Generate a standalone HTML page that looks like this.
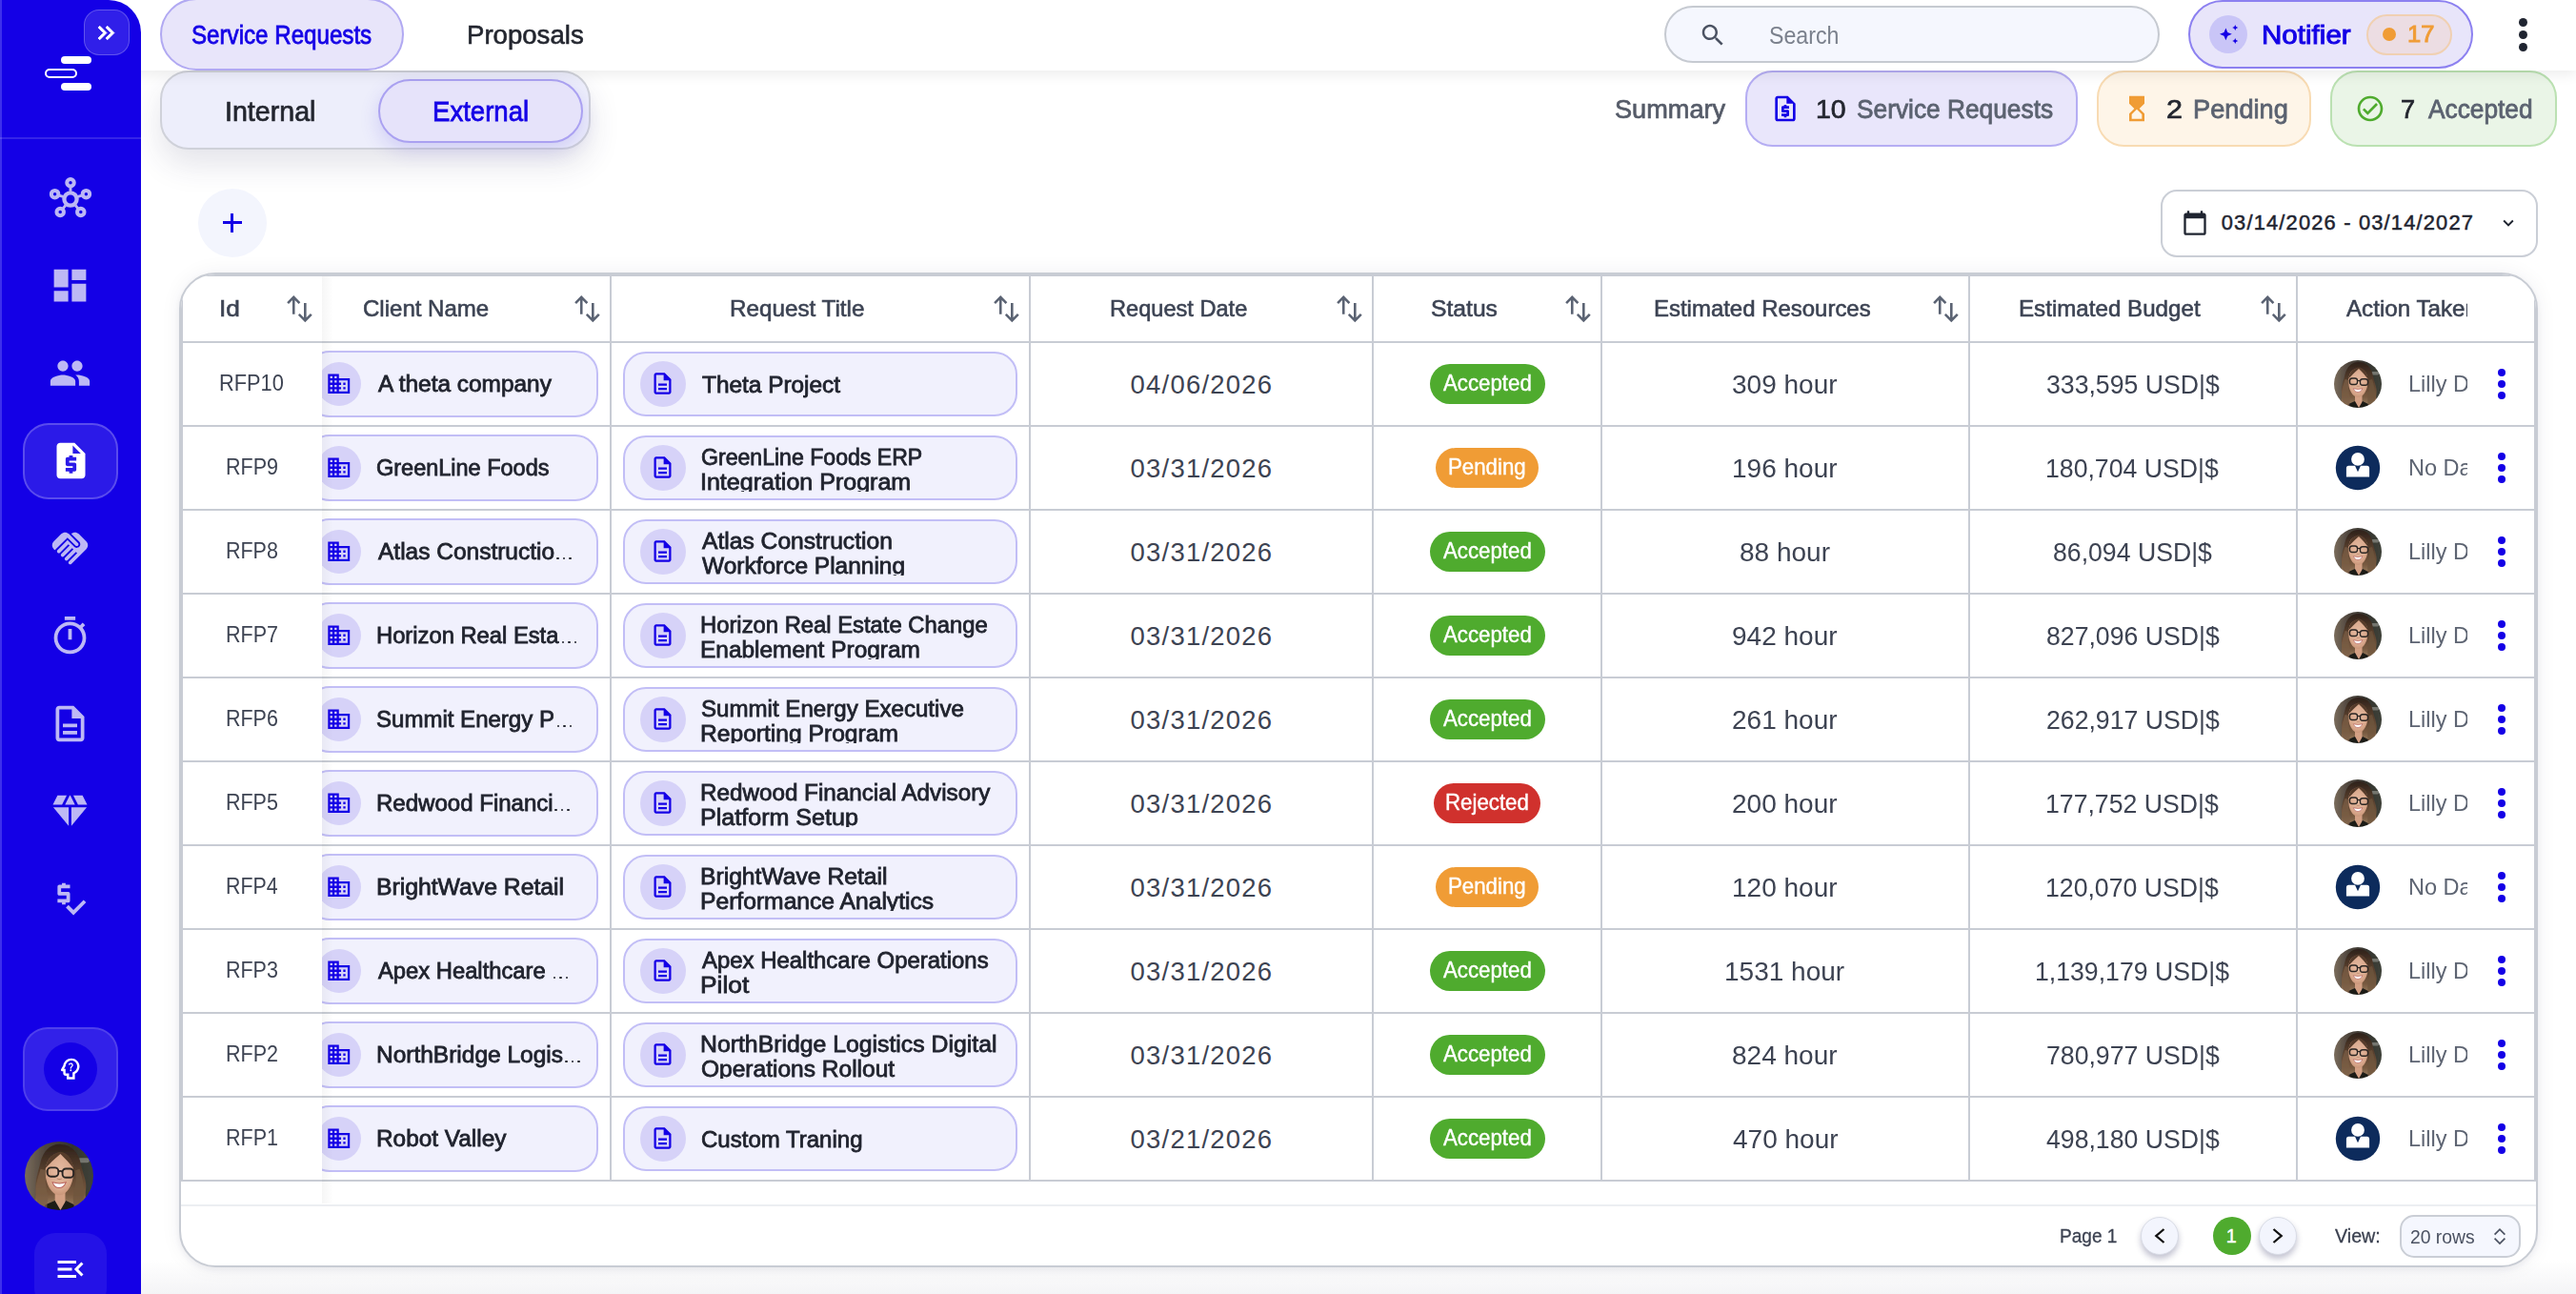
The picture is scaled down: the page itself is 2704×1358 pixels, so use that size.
<!DOCTYPE html>
<html><head><meta charset="utf-8"><title>Service Requests</title><style>
html,body{margin:0;padding:0}
body{width:2704px;height:1358px;overflow:hidden;position:relative;background:#fff;font-family:"Liberation Sans",sans-serif}
.L{position:absolute;left:0;top:0}
.t{position:absolute;white-space:nowrap;transform-origin:0 50%;display:block}
#hdr{position:absolute;left:100px;top:0;width:2604px;height:74px;background:#fff;box-shadow:0 5px 12px rgba(0,0,0,.07);z-index:2}
#btm{position:absolute;left:148px;top:1322px;width:2556px;height:36px;background:linear-gradient(#fff,#f4f4f6)}
#side{position:absolute;left:0;top:0;width:148px;height:1358px;box-sizing:border-box;background:#1400e6;border-top-right-radius:34px;border-left:2px solid #3d2fec}
#card{position:absolute;left:188px;top:286px;width:2476px;height:1044px;box-sizing:border-box;border:2px solid #c8ccd4;border-radius:38px;background:#fff;box-shadow:0 3px 6px rgba(30,30,60,.06),0 0 22px rgba(30,30,60,.06);overflow:hidden}
#frame{position:absolute;left:0;top:0;width:2472px;height:952px;box-sizing:border-box;border:2px solid #c8ccd4;border-bottom:none}
</style></head><body>
<svg width="0" height="0" style="position:absolute"><defs>
<linearGradient id="avbg" x1="0" x2="1" y1="0" y2="0"><stop offset="0" stop-color="#7a6c5c"/><stop offset=".3" stop-color="#4e453d"/><stop offset=".7" stop-color="#33332d"/><stop offset="1" stop-color="#3f423a"/></linearGradient>
<linearGradient id="avh" x1="0" y1="0" x2="0" y2="1"><stop offset="0" stop-color="#2e211a"/><stop offset=".35" stop-color="#523b2b"/><stop offset=".75" stop-color="#785a40"/><stop offset="1" stop-color="#a48a6a"/></linearGradient>
<radialGradient id="avf" cx=".5" cy=".45" r=".6"><stop offset="0" stop-color="#e6bca3"/><stop offset=".7" stop-color="#d9a88c"/><stop offset="1" stop-color="#c48f72"/></radialGradient>
<clipPath id="avc"><circle cx="50" cy="50" r="50"/></clipPath>
<filter id="avb" x="-5%" y="-5%" width="110%" height="110%"><feGaussianBlur stdDeviation="0.9"/></filter>
</defs></svg>
<div id="hdr"></div>
<div id="btm"></div>
<div class="L" style="z-index:4">
<div id="side"></div>
<div style="position:absolute;left:0px;top:144px;width:148px;height:2px;background:rgba(255,255,255,.14)"></div>
<div style="position:absolute;left:88px;top:10px;width:48px;height:48px;box-sizing:border-box;border-radius:16px;background:rgba(255,255,255,.12);border:1.5px solid rgba(255,255,255,.24)"></div>
<svg style="position:absolute;left:97.20px;top:19.50px" width="29" height="29" viewBox="0 0 24 24" fill="#fff" stroke="#fff" stroke-width="0.7"><path d="M6.410 6L5 7.410 9.580 12 5 16.590 6.410 18l6-6z"/><path d="M13 6l-1.410 1.410L16.170 12l-4.580 4.590L13 18l6-6z"/></svg>
<div style="position:absolute;left:64px;top:59px;width:32px;height:8px;border-radius:4px;background:#fff"></div>
<div style="position:absolute;left:47px;top:72px;width:34px;height:10px;box-sizing:border-box;border-radius:5px;border:2px solid #fff"></div>
<div style="position:absolute;left:64px;top:87px;width:32px;height:8px;border-radius:4px;background:#fff"></div>
<svg style="position:absolute;left:47.75px;top:182.75px" width="52" height="52" viewBox="-26 -26 52 52"><circle cx="0" cy="0" r="6.6" fill="none" stroke="#bdb8f5" stroke-width="4.3"/><line x1="0.00" y1="-8.20" x2="0.00" y2="-13.50" stroke="#bdb8f5" stroke-width="2.9"/><circle cx="0.00" cy="-17.25" r="3.75" fill="none" stroke="#bdb8f5" stroke-width="4"/><line x1="7.80" y1="-2.53" x2="12.84" y2="-4.17" stroke="#bdb8f5" stroke-width="2.9"/><circle cx="16.41" cy="-5.33" r="3.75" fill="none" stroke="#bdb8f5" stroke-width="4"/><line x1="5.13" y1="6.40" x2="8.44" y2="10.54" stroke="#bdb8f5" stroke-width="2.9"/><circle cx="10.79" cy="13.46" r="3.75" fill="none" stroke="#bdb8f5" stroke-width="4"/><line x1="-5.13" y1="6.40" x2="-8.44" y2="10.54" stroke="#bdb8f5" stroke-width="2.9"/><circle cx="-10.79" cy="13.46" r="3.75" fill="none" stroke="#bdb8f5" stroke-width="4"/><line x1="-7.80" y1="-2.53" x2="-12.84" y2="-4.17" stroke="#bdb8f5" stroke-width="2.9"/><circle cx="-16.41" cy="-5.33" r="3.75" fill="none" stroke="#bdb8f5" stroke-width="4"/></svg>
<svg style="position:absolute;left:51.40px;top:277.25px" width="45" height="45" viewBox="0 0 24 24" fill="#bdb8f5" ><path d="M3 13h8V3H3v10zm0 8h8v-6H3v6zm10 0h8V11h-8v10zm0-18v6h8V3h-8z"/></svg>
<svg style="position:absolute;left:51.40px;top:369.25px" width="45" height="45" viewBox="0 0 24 24" fill="#bdb8f5" ><path d="M16 11c1.66 0 2.99-1.34 2.99-3S17.66 5 16 5c-1.66 0-3 1.34-3 3s1.34 3 3 3zm-8 0c1.66 0 2.99-1.34 2.99-3S9.66 5 8 5C6.34 5 5 6.34 5 8s1.34 3 3 3zm0 2c-2.33 0-7 1.17-7 3.5V19h14v-2.5c0-2.33-4.67-3.5-7-3.5zm8 0c-.29 0-.62.02-.97.05 1.16.84 1.97 1.97 1.97 3.45V19h6v-2.5c0-2.33-4.67-3.5-7-3.5z"/></svg>
<div style="position:absolute;left:24px;top:443.75px;width:100px;height:80px;box-sizing:border-box;border-radius:27px;background:rgba(255,255,255,.10);border:2px solid rgba(255,255,255,.22)"></div>
<svg style="position:absolute;left:51.50px;top:461.25px" width="45" height="45" viewBox="0 0 24 24" fill="#fff" ><path d="M14 2H6c-1.1 0-2 .9-2 2v16c0 1.1.9 2 2 2h12c1.1 0 2-.9 2-2V8l-6-6zm1 10h-4v1h3c.55 0 1 .45 1 1v3c0 .55-.45 1-1 1h-1v1h-2v-1H9v-2h4v-1h-3c-.55 0-1-.45-1-1v-3c0-.55.45-1 1-1h1V9h2v1h2v2zm-2-4V3.5L17.5 8H13z"/></svg>
<svg style="position:absolute;left:51.40px;top:553.25px" width="45" height="45" viewBox="0 0 24 24" fill="#bdb8f5" ><path d="M16.48 10.41c-.39.39-1.04.39-1.43 0l-4.47-4.46-7.05 7.04-.66-.63c-1.17-1.17-1.17-3.07 0-4.24l4.24-4.24c1.17-1.17 3.07-1.17 4.24 0L16.48 9c.39.39.39 1.02 0 1.41zm.7-2.12c.78.78.78 2.05 0 2.83-1.27 1.27-2.61.22-2.83 0l-3.76-3.76-5.57 5.57c-.39.39-.39 1.02 0 1.41.39.39 1.02.39 1.42 0l4.62-4.62.71.71-4.62 4.62c-.39.39-.39 1.02 0 1.41.39.39 1.02.39 1.42 0l4.62-4.62.71.71-4.62 4.62c-.39.39-.39 1.02 0 1.41.39.39 1.02.39 1.41 0l4.62-4.62.71.71-4.62 4.62c-.39.39-.39 1.02 0 1.41.39.39 1.02.39 1.41 0l8.32-8.34c1.17-1.17 1.17-3.07 0-4.24l-4.24-4.24c-1.15-1.15-3.01-1.17-4.18-.06l4.47 4.47z"/></svg>
<svg style="position:absolute;left:51.40px;top:645.25px" width="45" height="45" viewBox="0 0 24 24" fill="#bdb8f5" ><path d="M15 1H9v2h6V1zm-4 13h2V8h-2v6zm8.03-6.61l1.42-1.42c-.43-.51-.9-.99-1.41-1.41l-1.42 1.42C16.07 4.74 14.12 4 12 4c-4.97 0-9 4.03-9 9s4.02 9 9 9 9-4.03 9-9c0-2.12-.74-4.07-1.97-5.61zM12 20c-3.87 0-7-3.13-7-7s3.130-7 7-7 7 3.130 7 7-3.130 7-7 7z"/></svg>
<svg style="position:absolute;left:51.40px;top:737.25px" width="45" height="45" viewBox="0 0 24 24" fill="#bdb8f5" ><path d="M8 16h8v2H8zm0-4h8v2H8zm6-10H6c-1.1 0-2 .9-2 2v16c0 1.1.89 2 1.99 2H18c1.1 0 2-.9 2-2V8l-6-6zm4 18H6V4h7v5h5v11z"/></svg>
<svg style="position:absolute;left:51.40px;top:829.25px" width="45" height="45" viewBox="0 0 24 24" fill="#bdb8f5" ><path d="M12.16 3h-.32L9.21 8.25h5.58zm4.3 5.25h5.16L19 3h-5.16zm4.92 1.5h-8.63V20.1zM11.25 20.1V9.75H2.62zM7.54 8.25L10.16 3H5L2.38 8.250z"/></svg>
<svg style="position:absolute;left:51.40px;top:921.25px" width="45" height="45" viewBox="0 0 24 24" fill="#bdb8f5" ><path d="M12 13V9c0-.55-.45-1-1-1H7V6h5V4H9.5V3h-2v1H6c-.55 0-1 .45-1 1v4c0 .55.45 1 1 1h4v2H5v2h2.500v1h2v-1H11c.55 0 1-.45 1-1zm7.590-.48l-5.660 5.650-2.830-2.830-1.410 1.420L13.930 21 21 13.930z"/></svg>
<div style="position:absolute;left:24px;top:1078px;width:100px;height:88px;box-sizing:border-box;border-radius:26px;background:rgba(255,255,255,.13);border:2px solid rgba(255,255,255,.14)"></div>
<div style="position:absolute;left:46px;top:1094px;width:56px;height:56px;border-radius:50%;background:#1400e6"></div>
<svg style="position:absolute;left:59.20px;top:1107.30px" width="29.4" height="29.4" viewBox="0 0 24 24" fill="#fff" ><path fill-rule="evenodd" d="M19.94 9.06C19.5 5.73 16.57 3 13 3 9.47 3 6.57 5.61 6.08 9l-1.930 3.480c-.41.66.07 1.520.85 1.520h1v2c0 1.100.9 2 2 2h1v3h7v-4.680c2.620-1.250 4.350-4.080 3.940-7.260zM14.890 14.630L14 15.100V19h-3v-3H8v-4H6.700l1.330-2.330C8.210 7.060 10.350 5 13 5c2.760 0 5 2.240 5 5 0 2.090-1.290 3.880-3.110 4.630z"/><path d="M12.500 12.540c-.41 0-.74.31-.74.73 0 .41.33.74.74.74.42 0 .73-.33.73-.74 0-.42-.31-.73-.73-.73zM12.500 7c-1.030 0-1.740.67-2 1.450l.96.400c.13-.39.43-.86 1.050-.86.95 0 1.130.89.800 1.360-.32.45-.86.75-1.140 1.260-.23.400-.18.870-.18 1.160h1.060c0-.55.04-.65.130-.82.230-.42.650-.62 1.090-1.270.400-.59.250-1.380-.010-1.800-.31-.49-.9-.88-1.760-.88z"/></svg>
<svg style="position:absolute;left:26.0px;top:1198.0px" width="72" height="72" viewBox="0 0 100 100"><g clip-path="url(#avc)"><g filter="url(#avb)"><rect width="100" height="100" fill="url(#avbg)"/><rect x="78" y="24" width="16" height="7" rx="3" fill="#8d8f88" opacity=".7"/><path d="M53 4C37 3 27 14 23 30 20 44 15 54 16 68c1 10-2 20 1 34h72c3-12-2-20 0-32 2-12-4-22-7-36C79 16 69 5 53 4z" fill="url(#avh)"/><path d="M44 74h15v18l-7 8-8-8z" fill="#d3a084"/><path d="M30 92l14-6 8 14 8-14 12 6 4 10H26z" fill="#1d1a19"/><path d="M51 17c-12 0-21 11-21 28 0 16 9 33 20.500 33S71 61 71 45c0-17-8-28-20-28z" fill="url(#avf)"/><path d="M52 15c-9 1-19 8-22 24 6-6 12-13 22-21 7 7 13 13 19 21-2-16-10-23-19-24z" fill="#543b2b"/><path d="M23 40c-4 14-9 26-6 40 2 8 0 14 2 22h14c-2-10 2-16 0-26-2-10-4-20-1-34z" fill="#7a5e45" opacity=".75"/><path d="M80 40c4 14 8 26 6 40-1 8 1 14-1 22H71c2-10-2-16 0-26 2-10 5-20 3-34z" fill="#6f553e" opacity=".75"/><g fill="none" stroke="#2b2523" stroke-width="2.600"><rect x="33" y="38" width="16" height="13" rx="5"/><rect x="55" y="39.500" width="16" height="13" rx="5"/><path d="M49 43.500q3-1.500 6 .5"/></g><path d="M40.500 59.500q10 3 19.500 0-3 8-10 8t-9.500-8z" fill="#fff" stroke="#b9625c" stroke-width="1.400"/><path d="M47 54q3.500 2 7 0" fill="none" stroke="#b98468" stroke-width="1.500"/></g></g></svg>
<div style="position:absolute;left:36px;top:1294px;width:76px;height:80px;border-radius:22px;background:rgba(255,255,255,.07)"></div>
<svg style="position:absolute;left:55.50px;top:1314.00px" width="36" height="36" viewBox="0 0 24 24" fill="#fff" ><path d="M3 18h13v-2H3v2zm0-5h10v-2H3v2zm0-7v2h13V6H3zm18 9.590L17.420 12 21 8.410 19.590 7l-5 5 5 5L21 15.590z"/></svg>
</div>
<div class="L" style="z-index:3">
<div style="position:absolute;left:168px;top:-2px;width:256px;height:76px;box-sizing:border-box;border-radius:38px;background:#e8e5fa;border:2px solid #b1a9f2"></div>
<span class="t" style="left:201.21px;top:21.55px;font-size:26.89px;line-height:30px;color:#1400e6;transform:scaleX(0.8982);-webkit-text-stroke:0.8px #1400e6;">Service Requests</span>
<span class="t" style="left:490.29px;top:21.00px;font-size:27.62px;line-height:31px;color:#23262f;transform:scaleX(0.9993);-webkit-text-stroke:0.6px #23262f;">Proposals</span>
<div style="position:absolute;left:1747px;top:6px;width:520px;height:60px;box-sizing:border-box;border-radius:30px;background:#f5f7fe;border:2px solid #c6cad1"></div>
<svg style="position:absolute;left:1783.00px;top:22.00px" width="30" height="30" viewBox="0 0 24 24" fill="#4b5262" ><path d="M15.5 14h-.79l-.28-.27C15.41 12.59 16 11.11 16 9.5 16 5.91 13.09 3 9.5 3S3 5.91 3 9.5 5.91 16 9.5 16c1.61 0 3.09-.59 4.23-1.57l.27.28v.79l5 4.99L20.49 19l-4.99-5zm-6 0C7.01 14 5 11.99 5 9.5S7.01 5 9.500 5 14 7.010 14 9.500 11.990 14 9.500 14z"/></svg>
<span class="t" style="left:1856.96px;top:22.00px;font-size:26.16px;line-height:30px;color:#7b818d;transform:scaleX(0.8869);">Search</span>
<div style="position:absolute;left:2297px;top:0px;width:299px;height:72px;box-sizing:border-box;border-radius:36px;background:#e8e5fa;border:2px solid #8c80f0"></div>
<div style="position:absolute;left:2319px;top:16px;width:40px;height:40px;border-radius:50%;background:#c9c5f7"></div>
<svg style="position:absolute;left:2329.7px;top:26.15px" width="20" height="20" viewBox="0 0 20 20" fill="#1400e6"><path d="M6.40 3.45L8.32 7.93L12.80 9.85L8.32 11.77L6.40 16.25L4.48 11.77L0.00 9.85L4.48 7.93zM16.25 0.00L17.15 2.10L19.25 3.00L17.15 3.90L16.25 6.00L15.35 3.90L13.25 3.00L15.35 2.10zM16.25 14.00L17.15 16.10L19.25 17.00L17.15 17.90L16.25 20.00L15.35 17.90L13.25 17.00L15.35 16.10z"/></svg>
<span class="t" style="left:2373.93px;top:21.23px;font-size:27.98px;line-height:31px;color:#1400e6;transform:scaleX(1.0577);-webkit-text-stroke:1.0px #1400e6;">Notifier</span>
<div style="position:absolute;left:2483.5px;top:14.5px;width:90px;height:43px;box-sizing:border-box;border-radius:22px;background:#ecdde3;border:2px solid #f0d0b2"></div>
<div style="position:absolute;left:2501px;top:29px;width:14px;height:14px;border-radius:50%;background:#f09c35"></div>
<span class="t" style="left:2527.28px;top:23.48px;font-size:23.59px;line-height:26px;color:#f09c35;transform:scaleX(1.0833);-webkit-text-stroke:0.9px #f09c35;">17</span>
<div style="position:absolute;left:2643.5px;top:19.0px;width:9px;height:9px;border-radius:50%;background:#1f2430"></div>
<div style="position:absolute;left:2643.5px;top:31.5px;width:9px;height:9px;border-radius:50%;background:#1f2430"></div>
<div style="position:absolute;left:2643.5px;top:44.5px;width:9px;height:9px;border-radius:50%;background:#1f2430"></div>
</div>
<div style="position:absolute;left:168.2px;top:74.2px;width:451.5px;height:83px;box-sizing:border-box;border-radius:30px;background:#edeefb;border:2px solid #cfd1d9;box-shadow:0 16px 32px rgba(50,50,90,.13)"></div>
<div style="position:absolute;left:396.5px;top:82.5px;width:215px;height:67px;box-sizing:border-box;border-radius:34px;background:#e6e3fa;border:2px solid #aaa1f1;box-shadow:0 8px 20px rgba(80,60,220,.18)"></div>
<span class="t" style="left:235.92px;top:99.95px;font-size:29.80px;line-height:33px;color:#23262f;transform:scaleX(0.9604);-webkit-text-stroke:0.7px #23262f;">Internal</span>
<span class="t" style="left:453.50px;top:99.95px;font-size:29.80px;line-height:33px;color:#1400e6;transform:scaleX(0.9248);-webkit-text-stroke:0.8px #1400e6;">External</span>
<span class="t" style="left:1695.28px;top:99.00px;font-size:27.62px;line-height:31px;color:#555b68;transform:scaleX(0.9833);-webkit-text-stroke:0.7px #555b68;">Summary</span>
<div style="position:absolute;left:1832px;top:74.3px;width:348.5px;height:79.5px;box-sizing:border-box;border-radius:28.5px;background:#e9e6fb;border:2px solid #b5adf3"></div>
<svg style="position:absolute;left:1858.00px;top:98.00px" width="32" height="32" viewBox="0 0 24 24" fill="#1400e6" ><path d="M14 2H6c-1.1 0-2 .9-2 2v16c0 1.1.9 2 2 2h12c1.1 0 2-.9 2-2V8l-6-6zM6 20V4h7v4h5v12H6zm5-1h2v-1h1c.55 0 1-.45 1-1v-3c0-.55-.45-1-1-1h-3v-1h4v-2h-2V9h-2v1h-1c-.55 0-1 .45-1 1v3c0 .55.45 1 1 1h3v1H9v2h2v1z"/></svg>
<span class="t" style="left:1905.86px;top:100.00px;font-size:26.76px;line-height:30px;color:#23262f;transform:scaleX(1.0650);-webkit-text-stroke:0.7px #23262f;">10</span>
<span class="t" style="left:1949.32px;top:99.00px;font-size:27.62px;line-height:31px;color:#5b6270;transform:scaleX(0.9525);-webkit-text-stroke:0.8px #5b6270;">Service Requests</span>
<div style="position:absolute;left:2201px;top:74.3px;width:225px;height:79.5px;box-sizing:border-box;border-radius:28.5px;background:#fef5e8;border:2px solid #f8dbb3"></div>
<svg style="position:absolute;left:2226.50px;top:98.00px" width="32" height="32" viewBox="0 0 24 24" fill="#f09c35" ><path d="M6 2l.01 6L10 12l-3.990 4.010L6 22h12v-6l-4-4 4-3.990V2H6zm10 14.500V20H8v-3.500l4-4 4 4z"/></svg>
<span class="t" style="left:2273.98px;top:100.00px;font-size:26.76px;line-height:30px;color:#23262f;transform:scaleX(1.1373);-webkit-text-stroke:0.7px #23262f;">2</span>
<span class="t" style="left:2301.82px;top:99.00px;font-size:27.62px;line-height:31px;color:#5b6270;transform:scaleX(0.9848);-webkit-text-stroke:0.8px #5b6270;">Pending</span>
<div style="position:absolute;left:2446.3px;top:74.3px;width:237.7px;height:79.5px;box-sizing:border-box;border-radius:28.5px;background:#eaf5e7;border:2px solid #bbe1b2"></div>
<svg style="position:absolute;left:2472.30px;top:98.00px" width="32" height="32" viewBox="0 0 24 24" fill="#4fab2e" ><path d="M12 2C6.480 2 2 6.480 2 12s4.480 10 10 10 10-4.480 10-10S17.520 2 12 2zm0 18c-4.410 0-8-3.590-8-8s3.590-8 8-8 8 3.590 8 8-3.590 8-8 8zm4.590-12.420L10 14.170l-2.590-2.580L6 13l4 4 8-8z"/></svg>
<span class="t" style="left:2520.14px;top:100.00px;font-size:26.76px;line-height:30px;color:#23262f;transform:scaleX(1.0154);-webkit-text-stroke:0.7px #23262f;">7</span>
<span class="t" style="left:2549.00px;top:99.00px;font-size:27.62px;line-height:31px;color:#5b6270;transform:scaleX(0.9515);-webkit-text-stroke:0.8px #5b6270;">Accepted</span>
<div style="position:absolute;left:208px;top:198px;width:72px;height:72px;border-radius:50%;background:#f3f5fd"></div>
<div style="position:absolute;left:233.7px;top:232.4px;width:20px;height:3px;background:#1400e6"></div>
<div style="position:absolute;left:242.2px;top:223.9px;width:3px;height:20px;background:#1400e6"></div>
<div style="position:absolute;left:2268px;top:198.5px;width:396px;height:71px;box-sizing:border-box;border-radius:17px;background:#fff;border:2px solid #caced6"></div>
<svg style="position:absolute;left:2290.00px;top:220.00px" width="28" height="28" viewBox="0 0 24 24" fill="#1f2430" ><path d="M20 3h-1V1h-2v2H7V1H5v2H4c-1.100 0-2 .9-2 2v16c0 1.100.9 2 2 2h16c1.100 0 2-.9 2-2V5c0-1.100-.9-2-2-2zm0 18H4V8h16v13z"/></svg>
<span class="t" style="left:2331.74px;top:221.25px;font-size:21.83px;line-height:25px;color:#1f2430;transform:scaleX(1.0000);-webkit-text-stroke:0.5px #1f2430;letter-spacing:1.195px;">03/14/2026 - 03/14/2027</span>
<svg style="position:absolute;left:2622.00px;top:223.00px" width="22" height="22" viewBox="0 0 24 24" fill="#1f2430" ><path d="M16.590 8.590L12 13.170 7.410 8.590 6 10l6 6 6-6z"/></svg>
<div id="card"><div id="frame"></div></div>
<div style="position:absolute;left:190px;top:358px;width:2472px;height:2px;background:#c8ccd4"></div>
<div style="position:absolute;left:190px;top:446px;width:2472px;height:2px;background:#c8ccd4"></div>
<div style="position:absolute;left:190px;top:534px;width:2472px;height:2px;background:#c8ccd4"></div>
<div style="position:absolute;left:190px;top:622px;width:2472px;height:2px;background:#c8ccd4"></div>
<div style="position:absolute;left:190px;top:710px;width:2472px;height:2px;background:#c8ccd4"></div>
<div style="position:absolute;left:190px;top:798px;width:2472px;height:2px;background:#c8ccd4"></div>
<div style="position:absolute;left:190px;top:886px;width:2472px;height:2px;background:#c8ccd4"></div>
<div style="position:absolute;left:190px;top:974px;width:2472px;height:2px;background:#c8ccd4"></div>
<div style="position:absolute;left:190px;top:1062px;width:2472px;height:2px;background:#c8ccd4"></div>
<div style="position:absolute;left:190px;top:1150px;width:2472px;height:2px;background:#c8ccd4"></div>
<div style="position:absolute;left:190px;top:1238px;width:2472px;height:2px;background:#c8ccd4"></div>
<div style="position:absolute;left:640px;top:290px;width:2px;height:950px;background:#c8ccd4"></div>
<div style="position:absolute;left:1080px;top:290px;width:2px;height:950px;background:#c8ccd4"></div>
<div style="position:absolute;left:1440px;top:290px;width:2px;height:950px;background:#c8ccd4"></div>
<div style="position:absolute;left:1680px;top:290px;width:2px;height:950px;background:#c8ccd4"></div>
<div style="position:absolute;left:2066px;top:290px;width:2px;height:950px;background:#c8ccd4"></div>
<div style="position:absolute;left:2410px;top:290px;width:2px;height:950px;background:#c8ccd4"></div>
<div style="position:absolute;left:190px;top:1264.3px;width:2472px;height:1.6px;background:#eceef2"></div>
<span class="t" style="left:229.64px;top:310.00px;font-size:24.71px;line-height:27px;color:#3c4353;transform:scaleX(1.0635);-webkit-text-stroke:0.6px #3c4353;">Id</span>
<svg style="position:absolute;left:300px;top:309px" width="30" height="31" viewBox="0 0 30 31" fill="none" stroke="#5b6373" stroke-width="2.6"><path d="M8.25 20.8V3.2M2.1 9.1l6.15-6.15 6.15 6.150M20.300 9.100v17.600M13.800 20.900l6.500 6.500 6.500-6.500"/></svg>
<span class="t" style="left:380.80px;top:310.00px;font-size:24.71px;line-height:27px;color:#3c4353;transform:scaleX(0.9725);-webkit-text-stroke:0.6px #3c4353;">Client Name</span>
<svg style="position:absolute;left:602px;top:309px" width="30" height="31" viewBox="0 0 30 31" fill="none" stroke="#5b6373" stroke-width="2.6"><path d="M8.25 20.8V3.2M2.1 9.1l6.15-6.15 6.15 6.150M20.300 9.100v17.600M13.800 20.900l6.500 6.500 6.500-6.500"/></svg>
<span class="t" style="left:766.06px;top:310.00px;font-size:24.71px;line-height:27px;color:#3c4353;transform:scaleX(0.9808);-webkit-text-stroke:0.6px #3c4353;">Request Title</span>
<svg style="position:absolute;left:1042px;top:309px" width="30" height="31" viewBox="0 0 30 31" fill="none" stroke="#5b6373" stroke-width="2.6"><path d="M8.25 20.8V3.2M2.1 9.1l6.15-6.15 6.15 6.150M20.300 9.100v17.600M13.800 20.900l6.500 6.500 6.500-6.500"/></svg>
<span class="t" style="left:1164.61px;top:310.00px;font-size:24.71px;line-height:27px;color:#3c4353;transform:scaleX(0.9552);-webkit-text-stroke:0.6px #3c4353;">Request Date</span>
<svg style="position:absolute;left:1402px;top:309px" width="30" height="31" viewBox="0 0 30 31" fill="none" stroke="#5b6373" stroke-width="2.6"><path d="M8.25 20.8V3.2M2.1 9.1l6.15-6.15 6.15 6.150M20.300 9.100v17.600M13.800 20.900l6.500 6.500 6.500-6.500"/></svg>
<span class="t" style="left:1501.89px;top:310.00px;font-size:24.71px;line-height:27px;color:#3c4353;transform:scaleX(0.9989);-webkit-text-stroke:0.6px #3c4353;">Status</span>
<svg style="position:absolute;left:1642px;top:309px" width="30" height="31" viewBox="0 0 30 31" fill="none" stroke="#5b6373" stroke-width="2.6"><path d="M8.25 20.8V3.2M2.1 9.1l6.15-6.15 6.15 6.150M20.300 9.100v17.600M13.800 20.900l6.500 6.500 6.500-6.500"/></svg>
<span class="t" style="left:1735.58px;top:310.00px;font-size:24.71px;line-height:27px;color:#3c4353;transform:scaleX(0.9697);-webkit-text-stroke:0.6px #3c4353;">Estimated Resources</span>
<svg style="position:absolute;left:2028px;top:309px" width="30" height="31" viewBox="0 0 30 31" fill="none" stroke="#5b6373" stroke-width="2.6"><path d="M8.25 20.8V3.2M2.1 9.1l6.15-6.15 6.15 6.150M20.300 9.100v17.600M13.800 20.900l6.500 6.500 6.500-6.500"/></svg>
<span class="t" style="left:2119.07px;top:310.00px;font-size:24.71px;line-height:27px;color:#3c4353;transform:scaleX(0.9774);-webkit-text-stroke:0.6px #3c4353;">Estimated Budget</span>
<svg style="position:absolute;left:2372px;top:309px" width="30" height="31" viewBox="0 0 30 31" fill="none" stroke="#5b6373" stroke-width="2.6"><path d="M8.25 20.8V3.2M2.1 9.1l6.15-6.15 6.15 6.150M20.300 9.100v17.600M13.800 20.900l6.500 6.500 6.500-6.500"/></svg>
<div style="position:absolute;left:2412px;top:290px;width:178px;height:68px;overflow:hidden">
<span class="t" style="left:51.00px;top:20.00px;font-size:24.71px;line-height:27px;color:#3c4353;transform:scaleX(0.9774);-webkit-text-stroke:0.6px #3c4353;">Action Taken</span>
</div>
<div style="position:absolute;left:338px;top:367px;width:300px;height:72px;overflow:hidden">
<div style="position:absolute;left:-16px;top:1px;width:305.5px;height:70px;box-sizing:border-box;border-radius:24px;background:#f1f1fd;border:2px solid #c2bef6"></div>
<div style="position:absolute;left:-5px;top:13px;width:46px;height:46px;border-radius:50%;background:#d6d2f8"></div>
</div>
<svg style="position:absolute;left:342.25px;top:389.25px" width="27.5" height="27.5" viewBox="0 0 24 24" fill="#1400e6" ><path d="M12 7V3H2v18h20V7H12zM6 19H4v-2h2v2zm0-4H4v-2h2v2zm0-4H4V9h2v2zm0-4H4V5h2v2zm4 12H8v-2h2v2zm0-4H8v-2h2v2zm0-4H8V9h2v2zm0-4H8V5h2v2zm10 12h-8v-2h2v-2h-2v-2h2v-2h-2V9h8v10zm-2-8h-2v2h2v-2zm0 4h-2v2h2v-2z"/></svg>
<span class="t" style="left:396.50px;top:389.25px;font-size:23.98px;line-height:27px;color:#20232e;transform:scaleX(1.0186);-webkit-text-stroke:0.8px #20232e;">A theta company</span>
<div style="position:absolute;left:654px;top:369px;width:413.5px;height:68px;box-sizing:border-box;border-radius:24px;background:#f1f1fd;border:2px solid #c2bef6"></div>
<div style="position:absolute;left:672px;top:379px;width:48px;height:48px;border-radius:50%;background:#d6d2f8"></div>
<svg style="position:absolute;left:682.30px;top:388.75px" width="27" height="27" viewBox="0 0 24 24" fill="#1400e6" ><path d="M8 16h8v2H8zm0-4h8v2H8zm6-10H6c-1.1 0-2 .9-2 2v16c0 1.1.89 2 1.99 2H18c1.1 0 2-.9 2-2V8l-6-6zm4 18H6V4h7v5h5v11z"/></svg>
<span class="t" style="left:736.51px;top:389.85px;font-size:23.98px;line-height:27px;color:#20232e;transform:scaleX(1.0178);-webkit-text-stroke:0.8px #20232e;">Theta Project</span>
<span class="t" style="left:230.23px;top:387.98px;font-size:24.35px;line-height:27px;color:#3d4352;transform:scaleX(0.8949);">RFP10</span>
<span class="t" style="left:1186.54px;top:388.00px;font-size:27.46px;line-height:31px;color:#3d4352;transform:scaleX(1.0000);letter-spacing:1.233px;">04/06/2026</span>
<div style="position:absolute;left:1500.5px;top:382px;width:121px;height:42px;border-radius:21px;background:#4fab2e"></div>
<span class="t" style="left:1515.25px;top:389.25px;font-size:23.26px;line-height:26px;color:#fff;transform:scaleX(0.9573);-webkit-text-stroke:0.4px #fff;">Accepted</span>
<span class="t" style="left:1818.49px;top:388.00px;font-size:27.46px;line-height:31px;color:#3d4352;transform:scaleX(1.0200);">309 hour</span>
<span class="t" style="left:2147.82px;top:388.00px;font-size:27.46px;line-height:31px;color:#3d4352;transform:scaleX(0.9708);">333,595 USD|$</span>
<svg style="position:absolute;left:2450.0px;top:377.75px" width="50" height="50" viewBox="0 0 100 100"><g clip-path="url(#avc)"><g filter="url(#avb)"><rect width="100" height="100" fill="url(#avbg)"/><rect x="78" y="24" width="16" height="7" rx="3" fill="#8d8f88" opacity=".7"/><path d="M53 4C37 3 27 14 23 30 20 44 15 54 16 68c1 10-2 20 1 34h72c3-12-2-20 0-32 2-12-4-22-7-36C79 16 69 5 53 4z" fill="url(#avh)"/><path d="M44 74h15v18l-7 8-8-8z" fill="#d3a084"/><path d="M30 92l14-6 8 14 8-14 12 6 4 10H26z" fill="#1d1a19"/><path d="M51 17c-12 0-21 11-21 28 0 16 9 33 20.500 33S71 61 71 45c0-17-8-28-20-28z" fill="url(#avf)"/><path d="M52 15c-9 1-19 8-22 24 6-6 12-13 22-21 7 7 13 13 19 21-2-16-10-23-19-24z" fill="#543b2b"/><path d="M23 40c-4 14-9 26-6 40 2 8 0 14 2 22h14c-2-10 2-16 0-26-2-10-4-20-1-34z" fill="#7a5e45" opacity=".75"/><path d="M80 40c4 14 8 26 6 40-1 8 1 14-1 22H71c2-10-2-16 0-26 2-10 5-20 3-34z" fill="#6f553e" opacity=".75"/><g fill="none" stroke="#2b2523" stroke-width="2.600"><rect x="33" y="38" width="16" height="13" rx="5"/><rect x="55" y="39.500" width="16" height="13" rx="5"/><path d="M49 43.500q3-1.500 6 .5"/></g><path d="M40.500 59.500q10 3 19.500 0-3 8-10 8t-9.500-8z" fill="#fff" stroke="#b9625c" stroke-width="1.400"/><path d="M47 54q3.500 2 7 0" fill="none" stroke="#b98468" stroke-width="1.500"/></g></g></svg>
<div style="position:absolute;left:2500px;top:373px;width:90px;height:60px;overflow:hidden">
<span class="t" style="left:27.52px;top:16.00px;font-size:23.84px;line-height:27px;color:#5d6472;transform:scaleX(0.9861);">Lilly D</span>
</div>
<div style="position:absolute;left:2622px;top:387px;width:8px;height:8px;border-radius:50%;background:#1400e6"></div>
<div style="position:absolute;left:2622px;top:399px;width:8px;height:8px;border-radius:50%;background:#1400e6"></div>
<div style="position:absolute;left:2622px;top:411px;width:8px;height:8px;border-radius:50%;background:#1400e6"></div>
<div style="position:absolute;left:338px;top:455px;width:300px;height:72px;overflow:hidden">
<div style="position:absolute;left:-16px;top:1px;width:305.5px;height:70px;box-sizing:border-box;border-radius:24px;background:#f1f1fd;border:2px solid #c2bef6"></div>
<div style="position:absolute;left:-5px;top:13px;width:46px;height:46px;border-radius:50%;background:#d6d2f8"></div>
</div>
<svg style="position:absolute;left:342.25px;top:477.25px" width="27.5" height="27.5" viewBox="0 0 24 24" fill="#1400e6" ><path d="M12 7V3H2v18h20V7H12zM6 19H4v-2h2v2zm0-4H4v-2h2v2zm0-4H4V9h2v2zm0-4H4V5h2v2zm4 12H8v-2h2v2zm0-4H8v-2h2v2zm0-4H8V9h2v2zm0-4H8V5h2v2zm10 12h-8v-2h2v-2h-2v-2h2v-2h-2V9h8v10zm-2-8h-2v2h2v-2zm0 4h-2v2h2v-2z"/></svg>
<span class="t" style="left:395.33px;top:477.25px;font-size:23.98px;line-height:27px;color:#20232e;transform:scaleX(0.9797);-webkit-text-stroke:0.8px #20232e;">GreenLine Foods</span>
<div style="position:absolute;left:654px;top:457px;width:413.5px;height:68px;box-sizing:border-box;border-radius:24px;background:#f1f1fd;border:2px solid #c2bef6"></div>
<div style="position:absolute;left:672px;top:467px;width:48px;height:48px;border-radius:50%;background:#d6d2f8"></div>
<svg style="position:absolute;left:682.30px;top:476.75px" width="27" height="27" viewBox="0 0 24 24" fill="#1400e6" ><path d="M8 16h8v2H8zm0-4h8v2H8zm6-10H6c-1.1 0-2 .9-2 2v16c0 1.1.89 2 1.99 2H18c1.1 0 2-.9 2-2V8l-6-6zm4 18H6V4h7v5h5v11z"/></svg>
<div style="position:absolute;left:730px;top:461px;width:330px;height:54.5px;overflow:hidden">
<span class="t" style="left:5.85px;top:4.75px;font-size:23.98px;line-height:27px;color:#20232e;transform:scaleX(0.9629);-webkit-text-stroke:0.8px #20232e;">GreenLine Foods ERP</span>
<span class="t" style="left:4.75px;top:30.75px;font-size:23.98px;line-height:27px;color:#20232e;transform:scaleX(1.0442);-webkit-text-stroke:0.8px #20232e;">Integration Program</span>
</div>
<span class="t" style="left:236.75px;top:475.98px;font-size:24.35px;line-height:27px;color:#3d4352;transform:scaleX(0.8832);">RFP9</span>
<span class="t" style="left:1186.54px;top:476.00px;font-size:27.46px;line-height:31px;color:#3d4352;transform:scaleX(1.0000);letter-spacing:1.233px;">03/31/2026</span>
<div style="position:absolute;left:1507.0px;top:470px;width:108px;height:42px;border-radius:21px;background:#f09c35"></div>
<span class="t" style="left:1519.93px;top:477.25px;font-size:23.26px;line-height:26px;color:#fff;transform:scaleX(0.9573);-webkit-text-stroke:0.4px #fff;">Pending</span>
<span class="t" style="left:1817.93px;top:476.00px;font-size:27.46px;line-height:31px;color:#3d4352;transform:scaleX(1.0200);">196 hour</span>
<span class="t" style="left:2147.28px;top:476.00px;font-size:27.46px;line-height:31px;color:#3d4352;transform:scaleX(0.9708);">180,704 USD|$</span>
<svg style="position:absolute;left:2451px;top:467px" width="48" height="48" viewBox="0 0 48 48"><circle cx="24" cy="24" r="23.2" fill="#0d2b5c"/><circle cx="24" cy="14.900" r="6.900" fill="#fff"/><path d="M11.900 24.200q0-2.500 2.500-2.500h6.600l3 6.600 3-6.600h6.600q2.500 0 2.500 2.500v9.300H11.900z" fill="#fff"/></svg>
<div style="position:absolute;left:2500px;top:461px;width:90px;height:60px;overflow:hidden">
<span class="t" style="left:27.52px;top:16.00px;font-size:23.84px;line-height:27px;color:#5d6472;transform:scaleX(0.9861);">No Data</span>
</div>
<div style="position:absolute;left:2622px;top:475px;width:8px;height:8px;border-radius:50%;background:#1400e6"></div>
<div style="position:absolute;left:2622px;top:487px;width:8px;height:8px;border-radius:50%;background:#1400e6"></div>
<div style="position:absolute;left:2622px;top:499px;width:8px;height:8px;border-radius:50%;background:#1400e6"></div>
<div style="position:absolute;left:338px;top:543px;width:300px;height:72px;overflow:hidden">
<div style="position:absolute;left:-16px;top:1px;width:305.5px;height:70px;box-sizing:border-box;border-radius:24px;background:#f1f1fd;border:2px solid #c2bef6"></div>
<div style="position:absolute;left:-5px;top:13px;width:46px;height:46px;border-radius:50%;background:#d6d2f8"></div>
</div>
<svg style="position:absolute;left:342.25px;top:565.25px" width="27.5" height="27.5" viewBox="0 0 24 24" fill="#1400e6" ><path d="M12 7V3H2v18h20V7H12zM6 19H4v-2h2v2zm0-4H4v-2h2v2zm0-4H4V9h2v2zm0-4H4V5h2v2zm4 12H8v-2h2v2zm0-4H8v-2h2v2zm0-4H8V9h2v2zm0-4H8V5h2v2zm10 12h-8v-2h2v-2h-2v-2h2v-2h-2V9h8v10zm-2-8h-2v2h2v-2zm0 4h-2v2h2v-2z"/></svg>
<span class="t" style="left:396.50px;top:565.25px;font-size:23.98px;line-height:27px;color:#20232e;transform:scaleX(1.0216);-webkit-text-stroke:0.8px #20232e;">Atlas Constructio</span>
<div style="position:absolute;left:584.0px;top:584.75px;width:2.5px;height:2.5px;border-radius:50%;background:#20232e"></div>
<div style="position:absolute;left:590.5px;top:584.75px;width:2.5px;height:2.5px;border-radius:50%;background:#20232e"></div>
<div style="position:absolute;left:597.0px;top:584.75px;width:2.5px;height:2.5px;border-radius:50%;background:#20232e"></div>
<div style="position:absolute;left:654px;top:545px;width:413.5px;height:68px;box-sizing:border-box;border-radius:24px;background:#f1f1fd;border:2px solid #c2bef6"></div>
<div style="position:absolute;left:672px;top:555px;width:48px;height:48px;border-radius:50%;background:#d6d2f8"></div>
<svg style="position:absolute;left:682.30px;top:564.75px" width="27" height="27" viewBox="0 0 24 24" fill="#1400e6" ><path d="M8 16h8v2H8zm0-4h8v2H8zm6-10H6c-1.1 0-2 .9-2 2v16c0 1.1.89 2 1.99 2H18c1.1 0 2-.9 2-2V8l-6-6zm4 18H6V4h7v5h5v11z"/></svg>
<div style="position:absolute;left:730px;top:549px;width:330px;height:54.5px;overflow:hidden">
<span class="t" style="left:7.00px;top:4.75px;font-size:23.98px;line-height:27px;color:#20232e;transform:scaleX(1.0275);-webkit-text-stroke:0.8px #20232e;">Atlas Construction</span>
<span class="t" style="left:6.88px;top:30.75px;font-size:23.98px;line-height:27px;color:#20232e;transform:scaleX(1.0207);-webkit-text-stroke:0.8px #20232e;">Workforce Planning</span>
</div>
<span class="t" style="left:236.76px;top:563.98px;font-size:24.35px;line-height:27px;color:#3d4352;transform:scaleX(0.8814);">RFP8</span>
<span class="t" style="left:1186.54px;top:564.00px;font-size:27.46px;line-height:31px;color:#3d4352;transform:scaleX(1.0000);letter-spacing:1.233px;">03/31/2026</span>
<div style="position:absolute;left:1500.5px;top:558px;width:121px;height:42px;border-radius:21px;background:#4fab2e"></div>
<span class="t" style="left:1515.25px;top:565.25px;font-size:23.26px;line-height:26px;color:#fff;transform:scaleX(0.9573);-webkit-text-stroke:0.4px #fff;">Accepted</span>
<span class="t" style="left:1826.20px;top:564.00px;font-size:27.46px;line-height:31px;color:#3d4352;transform:scaleX(1.0200);">88 hour</span>
<span class="t" style="left:2155.15px;top:564.00px;font-size:27.46px;line-height:31px;color:#3d4352;transform:scaleX(0.9708);">86,094 USD|$</span>
<svg style="position:absolute;left:2450.0px;top:553.75px" width="50" height="50" viewBox="0 0 100 100"><g clip-path="url(#avc)"><g filter="url(#avb)"><rect width="100" height="100" fill="url(#avbg)"/><rect x="78" y="24" width="16" height="7" rx="3" fill="#8d8f88" opacity=".7"/><path d="M53 4C37 3 27 14 23 30 20 44 15 54 16 68c1 10-2 20 1 34h72c3-12-2-20 0-32 2-12-4-22-7-36C79 16 69 5 53 4z" fill="url(#avh)"/><path d="M44 74h15v18l-7 8-8-8z" fill="#d3a084"/><path d="M30 92l14-6 8 14 8-14 12 6 4 10H26z" fill="#1d1a19"/><path d="M51 17c-12 0-21 11-21 28 0 16 9 33 20.500 33S71 61 71 45c0-17-8-28-20-28z" fill="url(#avf)"/><path d="M52 15c-9 1-19 8-22 24 6-6 12-13 22-21 7 7 13 13 19 21-2-16-10-23-19-24z" fill="#543b2b"/><path d="M23 40c-4 14-9 26-6 40 2 8 0 14 2 22h14c-2-10 2-16 0-26-2-10-4-20-1-34z" fill="#7a5e45" opacity=".75"/><path d="M80 40c4 14 8 26 6 40-1 8 1 14-1 22H71c2-10-2-16 0-26 2-10 5-20 3-34z" fill="#6f553e" opacity=".75"/><g fill="none" stroke="#2b2523" stroke-width="2.600"><rect x="33" y="38" width="16" height="13" rx="5"/><rect x="55" y="39.500" width="16" height="13" rx="5"/><path d="M49 43.500q3-1.500 6 .5"/></g><path d="M40.500 59.500q10 3 19.500 0-3 8-10 8t-9.500-8z" fill="#fff" stroke="#b9625c" stroke-width="1.400"/><path d="M47 54q3.500 2 7 0" fill="none" stroke="#b98468" stroke-width="1.500"/></g></g></svg>
<div style="position:absolute;left:2500px;top:549px;width:90px;height:60px;overflow:hidden">
<span class="t" style="left:27.52px;top:16.00px;font-size:23.84px;line-height:27px;color:#5d6472;transform:scaleX(0.9861);">Lilly D</span>
</div>
<div style="position:absolute;left:2622px;top:563px;width:8px;height:8px;border-radius:50%;background:#1400e6"></div>
<div style="position:absolute;left:2622px;top:575px;width:8px;height:8px;border-radius:50%;background:#1400e6"></div>
<div style="position:absolute;left:2622px;top:587px;width:8px;height:8px;border-radius:50%;background:#1400e6"></div>
<div style="position:absolute;left:338px;top:631px;width:300px;height:72px;overflow:hidden">
<div style="position:absolute;left:-16px;top:1px;width:305.5px;height:70px;box-sizing:border-box;border-radius:24px;background:#f1f1fd;border:2px solid #c2bef6"></div>
<div style="position:absolute;left:-5px;top:13px;width:46px;height:46px;border-radius:50%;background:#d6d2f8"></div>
</div>
<svg style="position:absolute;left:342.25px;top:653.25px" width="27.5" height="27.5" viewBox="0 0 24 24" fill="#1400e6" ><path d="M12 7V3H2v18h20V7H12zM6 19H4v-2h2v2zm0-4H4v-2h2v2zm0-4H4V9h2v2zm0-4H4V5h2v2zm4 12H8v-2h2v2zm0-4H8v-2h2v2zm0-4H8V9h2v2zm0-4H8V5h2v2zm10 12h-8v-2h2v-2h-2v-2h2v-2h-2V9h8v10zm-2-8h-2v2h2v-2zm0 4h-2v2h2v-2z"/></svg>
<span class="t" style="left:394.60px;top:653.25px;font-size:23.98px;line-height:27px;color:#20232e;transform:scaleX(0.9909);-webkit-text-stroke:0.8px #20232e;">Horizon Real Esta</span>
<div style="position:absolute;left:589.5px;top:672.75px;width:2.5px;height:2.5px;border-radius:50%;background:#20232e"></div>
<div style="position:absolute;left:596.0px;top:672.75px;width:2.5px;height:2.5px;border-radius:50%;background:#20232e"></div>
<div style="position:absolute;left:602.5px;top:672.75px;width:2.5px;height:2.5px;border-radius:50%;background:#20232e"></div>
<div style="position:absolute;left:654px;top:633px;width:413.5px;height:68px;box-sizing:border-box;border-radius:24px;background:#f1f1fd;border:2px solid #c2bef6"></div>
<div style="position:absolute;left:672px;top:643px;width:48px;height:48px;border-radius:50%;background:#d6d2f8"></div>
<svg style="position:absolute;left:682.30px;top:652.75px" width="27" height="27" viewBox="0 0 24 24" fill="#1400e6" ><path d="M8 16h8v2H8zm0-4h8v2H8zm6-10H6c-1.1 0-2 .9-2 2v16c0 1.1.89 2 1.99 2H18c1.1 0 2-.9 2-2V8l-6-6zm4 18H6V4h7v5h5v11z"/></svg>
<div style="position:absolute;left:730px;top:637px;width:330px;height:54.5px;overflow:hidden">
<span class="t" style="left:5.09px;top:4.75px;font-size:23.98px;line-height:27px;color:#20232e;transform:scaleX(0.9930);-webkit-text-stroke:0.8px #20232e;">Horizon Real Estate Change</span>
<span class="t" style="left:5.04px;top:30.75px;font-size:23.98px;line-height:27px;color:#20232e;transform:scaleX(1.0195);-webkit-text-stroke:0.8px #20232e;">Enablement Program</span>
</div>
<span class="t" style="left:236.75px;top:651.98px;font-size:24.35px;line-height:27px;color:#3d4352;transform:scaleX(0.8832);">RFP7</span>
<span class="t" style="left:1186.54px;top:652.00px;font-size:27.46px;line-height:31px;color:#3d4352;transform:scaleX(1.0000);letter-spacing:1.233px;">03/31/2026</span>
<div style="position:absolute;left:1500.5px;top:646px;width:121px;height:42px;border-radius:21px;background:#4fab2e"></div>
<span class="t" style="left:1515.25px;top:653.25px;font-size:23.26px;line-height:26px;color:#fff;transform:scaleX(0.9573);-webkit-text-stroke:0.4px #fff;">Accepted</span>
<span class="t" style="left:1818.35px;top:652.00px;font-size:27.46px;line-height:31px;color:#3d4352;transform:scaleX(1.0200);">942 hour</span>
<span class="t" style="left:2147.75px;top:652.00px;font-size:27.46px;line-height:31px;color:#3d4352;transform:scaleX(0.9708);">827,096 USD|$</span>
<svg style="position:absolute;left:2450.0px;top:641.75px" width="50" height="50" viewBox="0 0 100 100"><g clip-path="url(#avc)"><g filter="url(#avb)"><rect width="100" height="100" fill="url(#avbg)"/><rect x="78" y="24" width="16" height="7" rx="3" fill="#8d8f88" opacity=".7"/><path d="M53 4C37 3 27 14 23 30 20 44 15 54 16 68c1 10-2 20 1 34h72c3-12-2-20 0-32 2-12-4-22-7-36C79 16 69 5 53 4z" fill="url(#avh)"/><path d="M44 74h15v18l-7 8-8-8z" fill="#d3a084"/><path d="M30 92l14-6 8 14 8-14 12 6 4 10H26z" fill="#1d1a19"/><path d="M51 17c-12 0-21 11-21 28 0 16 9 33 20.500 33S71 61 71 45c0-17-8-28-20-28z" fill="url(#avf)"/><path d="M52 15c-9 1-19 8-22 24 6-6 12-13 22-21 7 7 13 13 19 21-2-16-10-23-19-24z" fill="#543b2b"/><path d="M23 40c-4 14-9 26-6 40 2 8 0 14 2 22h14c-2-10 2-16 0-26-2-10-4-20-1-34z" fill="#7a5e45" opacity=".75"/><path d="M80 40c4 14 8 26 6 40-1 8 1 14-1 22H71c2-10-2-16 0-26 2-10 5-20 3-34z" fill="#6f553e" opacity=".75"/><g fill="none" stroke="#2b2523" stroke-width="2.600"><rect x="33" y="38" width="16" height="13" rx="5"/><rect x="55" y="39.500" width="16" height="13" rx="5"/><path d="M49 43.500q3-1.500 6 .5"/></g><path d="M40.500 59.500q10 3 19.500 0-3 8-10 8t-9.500-8z" fill="#fff" stroke="#b9625c" stroke-width="1.400"/><path d="M47 54q3.500 2 7 0" fill="none" stroke="#b98468" stroke-width="1.500"/></g></g></svg>
<div style="position:absolute;left:2500px;top:637px;width:90px;height:60px;overflow:hidden">
<span class="t" style="left:27.52px;top:16.00px;font-size:23.84px;line-height:27px;color:#5d6472;transform:scaleX(0.9861);">Lilly D</span>
</div>
<div style="position:absolute;left:2622px;top:651px;width:8px;height:8px;border-radius:50%;background:#1400e6"></div>
<div style="position:absolute;left:2622px;top:663px;width:8px;height:8px;border-radius:50%;background:#1400e6"></div>
<div style="position:absolute;left:2622px;top:675px;width:8px;height:8px;border-radius:50%;background:#1400e6"></div>
<div style="position:absolute;left:338px;top:719px;width:300px;height:72px;overflow:hidden">
<div style="position:absolute;left:-16px;top:1px;width:305.5px;height:70px;box-sizing:border-box;border-radius:24px;background:#f1f1fd;border:2px solid #c2bef6"></div>
<div style="position:absolute;left:-5px;top:13px;width:46px;height:46px;border-radius:50%;background:#d6d2f8"></div>
</div>
<svg style="position:absolute;left:342.25px;top:741.25px" width="27.5" height="27.5" viewBox="0 0 24 24" fill="#1400e6" ><path d="M12 7V3H2v18h20V7H12zM6 19H4v-2h2v2zm0-4H4v-2h2v2zm0-4H4V9h2v2zm0-4H4V5h2v2zm4 12H8v-2h2v2zm0-4H8v-2h2v2zm0-4H8V9h2v2zm0-4H8V5h2v2zm10 12h-8v-2h2v-2h-2v-2h2v-2h-2V9h8v10zm-2-8h-2v2h2v-2zm0 4h-2v2h2v-2z"/></svg>
<span class="t" style="left:395.42px;top:741.25px;font-size:23.98px;line-height:27px;color:#20232e;transform:scaleX(1.0024);-webkit-text-stroke:0.8px #20232e;">Summit Energy P</span>
<div style="position:absolute;left:584.5px;top:760.75px;width:2.5px;height:2.5px;border-radius:50%;background:#20232e"></div>
<div style="position:absolute;left:591.0px;top:760.75px;width:2.5px;height:2.5px;border-radius:50%;background:#20232e"></div>
<div style="position:absolute;left:597.5px;top:760.75px;width:2.5px;height:2.5px;border-radius:50%;background:#20232e"></div>
<div style="position:absolute;left:654px;top:721px;width:413.5px;height:68px;box-sizing:border-box;border-radius:24px;background:#f1f1fd;border:2px solid #c2bef6"></div>
<div style="position:absolute;left:672px;top:731px;width:48px;height:48px;border-radius:50%;background:#d6d2f8"></div>
<svg style="position:absolute;left:682.30px;top:740.75px" width="27" height="27" viewBox="0 0 24 24" fill="#1400e6" ><path d="M8 16h8v2H8zm0-4h8v2H8zm6-10H6c-1.1 0-2 .9-2 2v16c0 1.1.89 2 1.99 2H18c1.1 0 2-.9 2-2V8l-6-6zm4 18H6V4h7v5h5v11z"/></svg>
<div style="position:absolute;left:730px;top:725px;width:330px;height:54.5px;overflow:hidden">
<span class="t" style="left:5.92px;top:4.75px;font-size:23.98px;line-height:27px;color:#20232e;transform:scaleX(1.0053);-webkit-text-stroke:0.8px #20232e;">Summit Energy Executive</span>
<span class="t" style="left:5.03px;top:30.75px;font-size:23.98px;line-height:27px;color:#20232e;transform:scaleX(1.0267);-webkit-text-stroke:0.8px #20232e;">Reporting Program</span>
</div>
<span class="t" style="left:236.76px;top:739.98px;font-size:24.35px;line-height:27px;color:#3d4352;transform:scaleX(0.8814);">RFP6</span>
<span class="t" style="left:1186.54px;top:740.00px;font-size:27.46px;line-height:31px;color:#3d4352;transform:scaleX(1.0000);letter-spacing:1.233px;">03/31/2026</span>
<div style="position:absolute;left:1500.5px;top:734px;width:121px;height:42px;border-radius:21px;background:#4fab2e"></div>
<span class="t" style="left:1515.25px;top:741.25px;font-size:23.26px;line-height:26px;color:#fff;transform:scaleX(0.9573);-webkit-text-stroke:0.4px #fff;">Accepted</span>
<span class="t" style="left:1818.28px;top:740.00px;font-size:27.46px;line-height:31px;color:#3d4352;transform:scaleX(1.0200);">261 hour</span>
<span class="t" style="left:2147.62px;top:740.00px;font-size:27.46px;line-height:31px;color:#3d4352;transform:scaleX(0.9708);">262,917 USD|$</span>
<svg style="position:absolute;left:2450.0px;top:729.75px" width="50" height="50" viewBox="0 0 100 100"><g clip-path="url(#avc)"><g filter="url(#avb)"><rect width="100" height="100" fill="url(#avbg)"/><rect x="78" y="24" width="16" height="7" rx="3" fill="#8d8f88" opacity=".7"/><path d="M53 4C37 3 27 14 23 30 20 44 15 54 16 68c1 10-2 20 1 34h72c3-12-2-20 0-32 2-12-4-22-7-36C79 16 69 5 53 4z" fill="url(#avh)"/><path d="M44 74h15v18l-7 8-8-8z" fill="#d3a084"/><path d="M30 92l14-6 8 14 8-14 12 6 4 10H26z" fill="#1d1a19"/><path d="M51 17c-12 0-21 11-21 28 0 16 9 33 20.500 33S71 61 71 45c0-17-8-28-20-28z" fill="url(#avf)"/><path d="M52 15c-9 1-19 8-22 24 6-6 12-13 22-21 7 7 13 13 19 21-2-16-10-23-19-24z" fill="#543b2b"/><path d="M23 40c-4 14-9 26-6 40 2 8 0 14 2 22h14c-2-10 2-16 0-26-2-10-4-20-1-34z" fill="#7a5e45" opacity=".75"/><path d="M80 40c4 14 8 26 6 40-1 8 1 14-1 22H71c2-10-2-16 0-26 2-10 5-20 3-34z" fill="#6f553e" opacity=".75"/><g fill="none" stroke="#2b2523" stroke-width="2.600"><rect x="33" y="38" width="16" height="13" rx="5"/><rect x="55" y="39.500" width="16" height="13" rx="5"/><path d="M49 43.500q3-1.500 6 .5"/></g><path d="M40.500 59.500q10 3 19.500 0-3 8-10 8t-9.500-8z" fill="#fff" stroke="#b9625c" stroke-width="1.400"/><path d="M47 54q3.500 2 7 0" fill="none" stroke="#b98468" stroke-width="1.500"/></g></g></svg>
<div style="position:absolute;left:2500px;top:725px;width:90px;height:60px;overflow:hidden">
<span class="t" style="left:27.52px;top:16.00px;font-size:23.84px;line-height:27px;color:#5d6472;transform:scaleX(0.9861);">Lilly D</span>
</div>
<div style="position:absolute;left:2622px;top:739px;width:8px;height:8px;border-radius:50%;background:#1400e6"></div>
<div style="position:absolute;left:2622px;top:751px;width:8px;height:8px;border-radius:50%;background:#1400e6"></div>
<div style="position:absolute;left:2622px;top:763px;width:8px;height:8px;border-radius:50%;background:#1400e6"></div>
<div style="position:absolute;left:338px;top:807px;width:300px;height:72px;overflow:hidden">
<div style="position:absolute;left:-16px;top:1px;width:305.5px;height:70px;box-sizing:border-box;border-radius:24px;background:#f1f1fd;border:2px solid #c2bef6"></div>
<div style="position:absolute;left:-5px;top:13px;width:46px;height:46px;border-radius:50%;background:#d6d2f8"></div>
</div>
<svg style="position:absolute;left:342.25px;top:829.25px" width="27.5" height="27.5" viewBox="0 0 24 24" fill="#1400e6" ><path d="M12 7V3H2v18h20V7H12zM6 19H4v-2h2v2zm0-4H4v-2h2v2zm0-4H4V9h2v2zm0-4H4V5h2v2zm4 12H8v-2h2v2zm0-4H8v-2h2v2zm0-4H8V9h2v2zm0-4H8V5h2v2zm10 12h-8v-2h2v-2h-2v-2h2v-2h-2V9h8v10zm-2-8h-2v2h2v-2zm0 4h-2v2h2v-2z"/></svg>
<span class="t" style="left:394.58px;top:829.25px;font-size:23.98px;line-height:27px;color:#20232e;transform:scaleX(1.0025);-webkit-text-stroke:0.8px #20232e;">Redwood Financi</span>
<div style="position:absolute;left:582.0px;top:848.75px;width:2.5px;height:2.5px;border-radius:50%;background:#20232e"></div>
<div style="position:absolute;left:588.5px;top:848.75px;width:2.5px;height:2.5px;border-radius:50%;background:#20232e"></div>
<div style="position:absolute;left:595.0px;top:848.75px;width:2.5px;height:2.5px;border-radius:50%;background:#20232e"></div>
<div style="position:absolute;left:654px;top:809px;width:413.5px;height:68px;box-sizing:border-box;border-radius:24px;background:#f1f1fd;border:2px solid #c2bef6"></div>
<div style="position:absolute;left:672px;top:819px;width:48px;height:48px;border-radius:50%;background:#d6d2f8"></div>
<svg style="position:absolute;left:682.30px;top:828.75px" width="27" height="27" viewBox="0 0 24 24" fill="#1400e6" ><path d="M8 16h8v2H8zm0-4h8v2H8zm6-10H6c-1.1 0-2 .9-2 2v16c0 1.1.89 2 1.99 2H18c1.1 0 2-.9 2-2V8l-6-6zm4 18H6V4h7v5h5v11z"/></svg>
<div style="position:absolute;left:730px;top:813px;width:330px;height:54.5px;overflow:hidden">
<span class="t" style="left:5.06px;top:4.75px;font-size:23.98px;line-height:27px;color:#20232e;transform:scaleX(1.0107);-webkit-text-stroke:0.8px #20232e;">Redwood Financial Advisory</span>
<span class="t" style="left:4.99px;top:30.75px;font-size:23.98px;line-height:27px;color:#20232e;transform:scaleX(1.0464);-webkit-text-stroke:0.8px #20232e;">Platform Setup</span>
</div>
<span class="t" style="left:236.76px;top:827.98px;font-size:24.35px;line-height:27px;color:#3d4352;transform:scaleX(0.8814);">RFP5</span>
<span class="t" style="left:1186.54px;top:828.00px;font-size:27.46px;line-height:31px;color:#3d4352;transform:scaleX(1.0000);letter-spacing:1.233px;">03/31/2026</span>
<div style="position:absolute;left:1505.0px;top:822px;width:112px;height:42px;border-radius:21px;background:#d0312d"></div>
<span class="t" style="left:1516.86px;top:829.25px;font-size:23.26px;line-height:26px;color:#fff;transform:scaleX(0.9573);-webkit-text-stroke:0.4px #fff;">Rejected</span>
<span class="t" style="left:1818.28px;top:828.00px;font-size:27.46px;line-height:31px;color:#3d4352;transform:scaleX(1.0200);">200 hour</span>
<span class="t" style="left:2147.28px;top:828.00px;font-size:27.46px;line-height:31px;color:#3d4352;transform:scaleX(0.9708);">177,752 USD|$</span>
<svg style="position:absolute;left:2450.0px;top:817.75px" width="50" height="50" viewBox="0 0 100 100"><g clip-path="url(#avc)"><g filter="url(#avb)"><rect width="100" height="100" fill="url(#avbg)"/><rect x="78" y="24" width="16" height="7" rx="3" fill="#8d8f88" opacity=".7"/><path d="M53 4C37 3 27 14 23 30 20 44 15 54 16 68c1 10-2 20 1 34h72c3-12-2-20 0-32 2-12-4-22-7-36C79 16 69 5 53 4z" fill="url(#avh)"/><path d="M44 74h15v18l-7 8-8-8z" fill="#d3a084"/><path d="M30 92l14-6 8 14 8-14 12 6 4 10H26z" fill="#1d1a19"/><path d="M51 17c-12 0-21 11-21 28 0 16 9 33 20.500 33S71 61 71 45c0-17-8-28-20-28z" fill="url(#avf)"/><path d="M52 15c-9 1-19 8-22 24 6-6 12-13 22-21 7 7 13 13 19 21-2-16-10-23-19-24z" fill="#543b2b"/><path d="M23 40c-4 14-9 26-6 40 2 8 0 14 2 22h14c-2-10 2-16 0-26-2-10-4-20-1-34z" fill="#7a5e45" opacity=".75"/><path d="M80 40c4 14 8 26 6 40-1 8 1 14-1 22H71c2-10-2-16 0-26 2-10 5-20 3-34z" fill="#6f553e" opacity=".75"/><g fill="none" stroke="#2b2523" stroke-width="2.600"><rect x="33" y="38" width="16" height="13" rx="5"/><rect x="55" y="39.500" width="16" height="13" rx="5"/><path d="M49 43.500q3-1.500 6 .5"/></g><path d="M40.500 59.500q10 3 19.500 0-3 8-10 8t-9.500-8z" fill="#fff" stroke="#b9625c" stroke-width="1.400"/><path d="M47 54q3.500 2 7 0" fill="none" stroke="#b98468" stroke-width="1.500"/></g></g></svg>
<div style="position:absolute;left:2500px;top:813px;width:90px;height:60px;overflow:hidden">
<span class="t" style="left:27.52px;top:16.00px;font-size:23.84px;line-height:27px;color:#5d6472;transform:scaleX(0.9861);">Lilly D</span>
</div>
<div style="position:absolute;left:2622px;top:827px;width:8px;height:8px;border-radius:50%;background:#1400e6"></div>
<div style="position:absolute;left:2622px;top:839px;width:8px;height:8px;border-radius:50%;background:#1400e6"></div>
<div style="position:absolute;left:2622px;top:851px;width:8px;height:8px;border-radius:50%;background:#1400e6"></div>
<div style="position:absolute;left:338px;top:895px;width:300px;height:72px;overflow:hidden">
<div style="position:absolute;left:-16px;top:1px;width:305.5px;height:70px;box-sizing:border-box;border-radius:24px;background:#f1f1fd;border:2px solid #c2bef6"></div>
<div style="position:absolute;left:-5px;top:13px;width:46px;height:46px;border-radius:50%;background:#d6d2f8"></div>
</div>
<svg style="position:absolute;left:342.25px;top:917.25px" width="27.5" height="27.5" viewBox="0 0 24 24" fill="#1400e6" ><path d="M12 7V3H2v18h20V7H12zM6 19H4v-2h2v2zm0-4H4v-2h2v2zm0-4H4V9h2v2zm0-4H4V5h2v2zm4 12H8v-2h2v2zm0-4H8v-2h2v2zm0-4H8V9h2v2zm0-4H8V5h2v2zm10 12h-8v-2h2v-2h-2v-2h2v-2h-2V9h8v10zm-2-8h-2v2h2v-2zm0 4h-2v2h2v-2z"/></svg>
<span class="t" style="left:394.52px;top:917.25px;font-size:23.98px;line-height:27px;color:#20232e;transform:scaleX(1.0318);-webkit-text-stroke:0.8px #20232e;">BrightWave Retail</span>
<div style="position:absolute;left:654px;top:897px;width:413.5px;height:68px;box-sizing:border-box;border-radius:24px;background:#f1f1fd;border:2px solid #c2bef6"></div>
<div style="position:absolute;left:672px;top:907px;width:48px;height:48px;border-radius:50%;background:#d6d2f8"></div>
<svg style="position:absolute;left:682.30px;top:916.75px" width="27" height="27" viewBox="0 0 24 24" fill="#1400e6" ><path d="M8 16h8v2H8zm0-4h8v2H8zm6-10H6c-1.1 0-2 .9-2 2v16c0 1.1.89 2 1.99 2H18c1.1 0 2-.9 2-2V8l-6-6zm4 18H6V4h7v5h5v11z"/></svg>
<div style="position:absolute;left:730px;top:901px;width:330px;height:54.5px;overflow:hidden">
<span class="t" style="left:5.03px;top:4.75px;font-size:23.98px;line-height:27px;color:#20232e;transform:scaleX(1.0291);-webkit-text-stroke:0.8px #20232e;">BrightWave Retail</span>
<span class="t" style="left:5.03px;top:30.75px;font-size:23.98px;line-height:27px;color:#20232e;transform:scaleX(1.0281);-webkit-text-stroke:0.8px #20232e;">Performance Analytics</span>
</div>
<span class="t" style="left:236.77px;top:915.98px;font-size:24.35px;line-height:27px;color:#3d4352;transform:scaleX(0.8760);">RFP4</span>
<span class="t" style="left:1186.54px;top:916.00px;font-size:27.46px;line-height:31px;color:#3d4352;transform:scaleX(1.0000);letter-spacing:1.233px;">03/31/2026</span>
<div style="position:absolute;left:1507.0px;top:910px;width:108px;height:42px;border-radius:21px;background:#f09c35"></div>
<span class="t" style="left:1519.93px;top:917.25px;font-size:23.26px;line-height:26px;color:#fff;transform:scaleX(0.9573);-webkit-text-stroke:0.4px #fff;">Pending</span>
<span class="t" style="left:1817.93px;top:916.00px;font-size:27.46px;line-height:31px;color:#3d4352;transform:scaleX(1.0200);">120 hour</span>
<span class="t" style="left:2147.28px;top:916.00px;font-size:27.46px;line-height:31px;color:#3d4352;transform:scaleX(0.9708);">120,070 USD|$</span>
<svg style="position:absolute;left:2451px;top:907px" width="48" height="48" viewBox="0 0 48 48"><circle cx="24" cy="24" r="23.2" fill="#0d2b5c"/><circle cx="24" cy="14.900" r="6.900" fill="#fff"/><path d="M11.900 24.200q0-2.500 2.500-2.500h6.600l3 6.600 3-6.600h6.600q2.500 0 2.500 2.500v9.300H11.900z" fill="#fff"/></svg>
<div style="position:absolute;left:2500px;top:901px;width:90px;height:60px;overflow:hidden">
<span class="t" style="left:27.52px;top:16.00px;font-size:23.84px;line-height:27px;color:#5d6472;transform:scaleX(0.9861);">No Data</span>
</div>
<div style="position:absolute;left:2622px;top:915px;width:8px;height:8px;border-radius:50%;background:#1400e6"></div>
<div style="position:absolute;left:2622px;top:927px;width:8px;height:8px;border-radius:50%;background:#1400e6"></div>
<div style="position:absolute;left:2622px;top:939px;width:8px;height:8px;border-radius:50%;background:#1400e6"></div>
<div style="position:absolute;left:338px;top:983px;width:300px;height:72px;overflow:hidden">
<div style="position:absolute;left:-16px;top:1px;width:305.5px;height:70px;box-sizing:border-box;border-radius:24px;background:#f1f1fd;border:2px solid #c2bef6"></div>
<div style="position:absolute;left:-5px;top:13px;width:46px;height:46px;border-radius:50%;background:#d6d2f8"></div>
</div>
<svg style="position:absolute;left:342.25px;top:1005.25px" width="27.5" height="27.5" viewBox="0 0 24 24" fill="#1400e6" ><path d="M12 7V3H2v18h20V7H12zM6 19H4v-2h2v2zm0-4H4v-2h2v2zm0-4H4V9h2v2zm0-4H4V5h2v2zm4 12H8v-2h2v2zm0-4H8v-2h2v2zm0-4H8V9h2v2zm0-4H8V5h2v2zm10 12h-8v-2h2v-2h-2v-2h2v-2h-2V9h8v10zm-2-8h-2v2h2v-2zm0 4h-2v2h2v-2z"/></svg>
<span class="t" style="left:396.50px;top:1005.25px;font-size:23.98px;line-height:27px;color:#20232e;transform:scaleX(0.9914);-webkit-text-stroke:0.8px #20232e;">Apex Healthcare</span>
<div style="position:absolute;left:580.5px;top:1024.75px;width:2.5px;height:2.5px;border-radius:50%;background:#20232e"></div>
<div style="position:absolute;left:587.0px;top:1024.75px;width:2.5px;height:2.5px;border-radius:50%;background:#20232e"></div>
<div style="position:absolute;left:593.5px;top:1024.75px;width:2.5px;height:2.5px;border-radius:50%;background:#20232e"></div>
<div style="position:absolute;left:654px;top:985px;width:413.5px;height:68px;box-sizing:border-box;border-radius:24px;background:#f1f1fd;border:2px solid #c2bef6"></div>
<div style="position:absolute;left:672px;top:995px;width:48px;height:48px;border-radius:50%;background:#d6d2f8"></div>
<svg style="position:absolute;left:682.30px;top:1004.75px" width="27" height="27" viewBox="0 0 24 24" fill="#1400e6" ><path d="M8 16h8v2H8zm0-4h8v2H8zm6-10H6c-1.1 0-2 .9-2 2v16c0 1.1.89 2 1.99 2H18c1.1 0 2-.9 2-2V8l-6-6zm4 18H6V4h7v5h5v11z"/></svg>
<div style="position:absolute;left:730px;top:989px;width:330px;height:54.5px;overflow:hidden">
<span class="t" style="left:7.00px;top:4.75px;font-size:23.98px;line-height:27px;color:#20232e;transform:scaleX(0.9983);-webkit-text-stroke:0.8px #20232e;">Apex Healthcare Operations</span>
<span class="t" style="left:4.89px;top:30.75px;font-size:23.98px;line-height:27px;color:#20232e;transform:scaleX(1.0985);-webkit-text-stroke:0.8px #20232e;">Pilot</span>
</div>
<span class="t" style="left:236.76px;top:1003.97px;font-size:24.35px;line-height:27px;color:#3d4352;transform:scaleX(0.8814);">RFP3</span>
<span class="t" style="left:1186.54px;top:1004.00px;font-size:27.46px;line-height:31px;color:#3d4352;transform:scaleX(1.0000);letter-spacing:1.233px;">03/31/2026</span>
<div style="position:absolute;left:1500.5px;top:998px;width:121px;height:42px;border-radius:21px;background:#4fab2e"></div>
<span class="t" style="left:1515.25px;top:1005.25px;font-size:23.26px;line-height:26px;color:#fff;transform:scaleX(0.9573);-webkit-text-stroke:0.4px #fff;">Accepted</span>
<span class="t" style="left:1810.16px;top:1004.00px;font-size:27.46px;line-height:31px;color:#3d4352;transform:scaleX(1.0200);">1531 hour</span>
<span class="t" style="left:2136.15px;top:1004.00px;font-size:27.46px;line-height:31px;color:#3d4352;transform:scaleX(0.9708);">1,139,179 USD|$</span>
<svg style="position:absolute;left:2450.0px;top:993.75px" width="50" height="50" viewBox="0 0 100 100"><g clip-path="url(#avc)"><g filter="url(#avb)"><rect width="100" height="100" fill="url(#avbg)"/><rect x="78" y="24" width="16" height="7" rx="3" fill="#8d8f88" opacity=".7"/><path d="M53 4C37 3 27 14 23 30 20 44 15 54 16 68c1 10-2 20 1 34h72c3-12-2-20 0-32 2-12-4-22-7-36C79 16 69 5 53 4z" fill="url(#avh)"/><path d="M44 74h15v18l-7 8-8-8z" fill="#d3a084"/><path d="M30 92l14-6 8 14 8-14 12 6 4 10H26z" fill="#1d1a19"/><path d="M51 17c-12 0-21 11-21 28 0 16 9 33 20.500 33S71 61 71 45c0-17-8-28-20-28z" fill="url(#avf)"/><path d="M52 15c-9 1-19 8-22 24 6-6 12-13 22-21 7 7 13 13 19 21-2-16-10-23-19-24z" fill="#543b2b"/><path d="M23 40c-4 14-9 26-6 40 2 8 0 14 2 22h14c-2-10 2-16 0-26-2-10-4-20-1-34z" fill="#7a5e45" opacity=".75"/><path d="M80 40c4 14 8 26 6 40-1 8 1 14-1 22H71c2-10-2-16 0-26 2-10 5-20 3-34z" fill="#6f553e" opacity=".75"/><g fill="none" stroke="#2b2523" stroke-width="2.600"><rect x="33" y="38" width="16" height="13" rx="5"/><rect x="55" y="39.500" width="16" height="13" rx="5"/><path d="M49 43.500q3-1.500 6 .5"/></g><path d="M40.500 59.500q10 3 19.500 0-3 8-10 8t-9.500-8z" fill="#fff" stroke="#b9625c" stroke-width="1.400"/><path d="M47 54q3.500 2 7 0" fill="none" stroke="#b98468" stroke-width="1.500"/></g></g></svg>
<div style="position:absolute;left:2500px;top:989px;width:90px;height:60px;overflow:hidden">
<span class="t" style="left:27.52px;top:16.00px;font-size:23.84px;line-height:27px;color:#5d6472;transform:scaleX(0.9861);">Lilly D</span>
</div>
<div style="position:absolute;left:2622px;top:1003px;width:8px;height:8px;border-radius:50%;background:#1400e6"></div>
<div style="position:absolute;left:2622px;top:1015px;width:8px;height:8px;border-radius:50%;background:#1400e6"></div>
<div style="position:absolute;left:2622px;top:1027px;width:8px;height:8px;border-radius:50%;background:#1400e6"></div>
<div style="position:absolute;left:338px;top:1071px;width:300px;height:72px;overflow:hidden">
<div style="position:absolute;left:-16px;top:1px;width:305.5px;height:70px;box-sizing:border-box;border-radius:24px;background:#f1f1fd;border:2px solid #c2bef6"></div>
<div style="position:absolute;left:-5px;top:13px;width:46px;height:46px;border-radius:50%;background:#d6d2f8"></div>
</div>
<svg style="position:absolute;left:342.25px;top:1093.25px" width="27.5" height="27.5" viewBox="0 0 24 24" fill="#1400e6" ><path d="M12 7V3H2v18h20V7H12zM6 19H4v-2h2v2zm0-4H4v-2h2v2zm0-4H4V9h2v2zm0-4H4V5h2v2zm4 12H8v-2h2v2zm0-4H8v-2h2v2zm0-4H8V9h2v2zm0-4H8V5h2v2zm10 12h-8v-2h2v-2h-2v-2h2v-2h-2V9h8v10zm-2-8h-2v2h2v-2zm0 4h-2v2h2v-2z"/></svg>
<span class="t" style="left:394.54px;top:1093.25px;font-size:23.98px;line-height:27px;color:#20232e;transform:scaleX(1.0213);-webkit-text-stroke:0.8px #20232e;">NorthBridge Logis</span>
<div style="position:absolute;left:593.0px;top:1112.75px;width:2.5px;height:2.5px;border-radius:50%;background:#20232e"></div>
<div style="position:absolute;left:599.5px;top:1112.75px;width:2.5px;height:2.5px;border-radius:50%;background:#20232e"></div>
<div style="position:absolute;left:606.0px;top:1112.75px;width:2.5px;height:2.5px;border-radius:50%;background:#20232e"></div>
<div style="position:absolute;left:654px;top:1073px;width:413.5px;height:68px;box-sizing:border-box;border-radius:24px;background:#f1f1fd;border:2px solid #c2bef6"></div>
<div style="position:absolute;left:672px;top:1083px;width:48px;height:48px;border-radius:50%;background:#d6d2f8"></div>
<svg style="position:absolute;left:682.30px;top:1092.75px" width="27" height="27" viewBox="0 0 24 24" fill="#1400e6" ><path d="M8 16h8v2H8zm0-4h8v2H8zm6-10H6c-1.1 0-2 .9-2 2v16c0 1.1.89 2 1.99 2H18c1.1 0 2-.9 2-2V8l-6-6zm4 18H6V4h7v5h5v11z"/></svg>
<div style="position:absolute;left:730px;top:1077px;width:330px;height:54.5px;overflow:hidden">
<span class="t" style="left:5.02px;top:4.75px;font-size:23.98px;line-height:27px;color:#20232e;transform:scaleX(1.0344);-webkit-text-stroke:0.8px #20232e;">NorthBridge Logistics Digital</span>
<span class="t" style="left:5.90px;top:30.75px;font-size:23.98px;line-height:27px;color:#20232e;transform:scaleX(1.0234);-webkit-text-stroke:0.8px #20232e;">Operations Rollout</span>
</div>
<span class="t" style="left:236.75px;top:1091.97px;font-size:24.35px;line-height:27px;color:#3d4352;transform:scaleX(0.8832);">RFP2</span>
<span class="t" style="left:1186.54px;top:1092.00px;font-size:27.46px;line-height:31px;color:#3d4352;transform:scaleX(1.0000);letter-spacing:1.233px;">03/31/2026</span>
<div style="position:absolute;left:1500.5px;top:1086px;width:121px;height:42px;border-radius:21px;background:#4fab2e"></div>
<span class="t" style="left:1515.25px;top:1093.25px;font-size:23.26px;line-height:26px;color:#fff;transform:scaleX(0.9573);-webkit-text-stroke:0.4px #fff;">Accepted</span>
<span class="t" style="left:1818.42px;top:1092.00px;font-size:27.46px;line-height:31px;color:#3d4352;transform:scaleX(1.0200);">824 hour</span>
<span class="t" style="left:2147.62px;top:1092.00px;font-size:27.46px;line-height:31px;color:#3d4352;transform:scaleX(0.9708);">780,977 USD|$</span>
<svg style="position:absolute;left:2450.0px;top:1081.75px" width="50" height="50" viewBox="0 0 100 100"><g clip-path="url(#avc)"><g filter="url(#avb)"><rect width="100" height="100" fill="url(#avbg)"/><rect x="78" y="24" width="16" height="7" rx="3" fill="#8d8f88" opacity=".7"/><path d="M53 4C37 3 27 14 23 30 20 44 15 54 16 68c1 10-2 20 1 34h72c3-12-2-20 0-32 2-12-4-22-7-36C79 16 69 5 53 4z" fill="url(#avh)"/><path d="M44 74h15v18l-7 8-8-8z" fill="#d3a084"/><path d="M30 92l14-6 8 14 8-14 12 6 4 10H26z" fill="#1d1a19"/><path d="M51 17c-12 0-21 11-21 28 0 16 9 33 20.500 33S71 61 71 45c0-17-8-28-20-28z" fill="url(#avf)"/><path d="M52 15c-9 1-19 8-22 24 6-6 12-13 22-21 7 7 13 13 19 21-2-16-10-23-19-24z" fill="#543b2b"/><path d="M23 40c-4 14-9 26-6 40 2 8 0 14 2 22h14c-2-10 2-16 0-26-2-10-4-20-1-34z" fill="#7a5e45" opacity=".75"/><path d="M80 40c4 14 8 26 6 40-1 8 1 14-1 22H71c2-10-2-16 0-26 2-10 5-20 3-34z" fill="#6f553e" opacity=".75"/><g fill="none" stroke="#2b2523" stroke-width="2.600"><rect x="33" y="38" width="16" height="13" rx="5"/><rect x="55" y="39.500" width="16" height="13" rx="5"/><path d="M49 43.500q3-1.500 6 .5"/></g><path d="M40.500 59.500q10 3 19.500 0-3 8-10 8t-9.500-8z" fill="#fff" stroke="#b9625c" stroke-width="1.400"/><path d="M47 54q3.500 2 7 0" fill="none" stroke="#b98468" stroke-width="1.500"/></g></g></svg>
<div style="position:absolute;left:2500px;top:1077px;width:90px;height:60px;overflow:hidden">
<span class="t" style="left:27.52px;top:16.00px;font-size:23.84px;line-height:27px;color:#5d6472;transform:scaleX(0.9861);">Lilly D</span>
</div>
<div style="position:absolute;left:2622px;top:1091px;width:8px;height:8px;border-radius:50%;background:#1400e6"></div>
<div style="position:absolute;left:2622px;top:1103px;width:8px;height:8px;border-radius:50%;background:#1400e6"></div>
<div style="position:absolute;left:2622px;top:1115px;width:8px;height:8px;border-radius:50%;background:#1400e6"></div>
<div style="position:absolute;left:338px;top:1159px;width:300px;height:72px;overflow:hidden">
<div style="position:absolute;left:-16px;top:1px;width:305.5px;height:70px;box-sizing:border-box;border-radius:24px;background:#f1f1fd;border:2px solid #c2bef6"></div>
<div style="position:absolute;left:-5px;top:13px;width:46px;height:46px;border-radius:50%;background:#d6d2f8"></div>
</div>
<svg style="position:absolute;left:342.25px;top:1181.25px" width="27.5" height="27.5" viewBox="0 0 24 24" fill="#1400e6" ><path d="M12 7V3H2v18h20V7H12zM6 19H4v-2h2v2zm0-4H4v-2h2v2zm0-4H4V9h2v2zm0-4H4V5h2v2zm4 12H8v-2h2v2zm0-4H8v-2h2v2zm0-4H8V9h2v2zm0-4H8V5h2v2zm10 12h-8v-2h2v-2h-2v-2h2v-2h-2V9h8v10zm-2-8h-2v2h2v-2zm0 4h-2v2h2v-2z"/></svg>
<span class="t" style="left:394.55px;top:1181.25px;font-size:23.98px;line-height:27px;color:#20232e;transform:scaleX(1.0169);-webkit-text-stroke:0.8px #20232e;">Robot Valley</span>
<div style="position:absolute;left:654px;top:1161px;width:413.5px;height:68px;box-sizing:border-box;border-radius:24px;background:#f1f1fd;border:2px solid #c2bef6"></div>
<div style="position:absolute;left:672px;top:1171px;width:48px;height:48px;border-radius:50%;background:#d6d2f8"></div>
<svg style="position:absolute;left:682.30px;top:1180.75px" width="27" height="27" viewBox="0 0 24 24" fill="#1400e6" ><path d="M8 16h8v2H8zm0-4h8v2H8zm6-10H6c-1.1 0-2 .9-2 2v16c0 1.1.89 2 1.99 2H18c1.1 0 2-.9 2-2V8l-6-6zm4 18H6V4h7v5h5v11z"/></svg>
<span class="t" style="left:735.80px;top:1181.85px;font-size:23.98px;line-height:27px;color:#20232e;transform:scaleX(1.0019);-webkit-text-stroke:0.8px #20232e;">Custom Traning</span>
<span class="t" style="left:236.75px;top:1179.97px;font-size:24.35px;line-height:27px;color:#3d4352;transform:scaleX(0.8832);">RFP1</span>
<span class="t" style="left:1186.54px;top:1180.00px;font-size:27.46px;line-height:31px;color:#3d4352;transform:scaleX(1.0000);letter-spacing:1.233px;">03/21/2026</span>
<div style="position:absolute;left:1500.5px;top:1174px;width:121px;height:42px;border-radius:21px;background:#4fab2e"></div>
<span class="t" style="left:1515.25px;top:1181.25px;font-size:23.26px;line-height:26px;color:#fff;transform:scaleX(0.9573);-webkit-text-stroke:0.4px #fff;">Accepted</span>
<span class="t" style="left:1818.70px;top:1180.00px;font-size:27.46px;line-height:31px;color:#3d4352;transform:scaleX(1.0200);">470 hour</span>
<span class="t" style="left:2148.02px;top:1180.00px;font-size:27.46px;line-height:31px;color:#3d4352;transform:scaleX(0.9708);">498,180 USD|$</span>
<svg style="position:absolute;left:2451px;top:1171px" width="48" height="48" viewBox="0 0 48 48"><circle cx="24" cy="24" r="23.2" fill="#0d2b5c"/><circle cx="24" cy="14.900" r="6.900" fill="#fff"/><path d="M11.900 24.200q0-2.500 2.500-2.500h6.600l3 6.600 3-6.600h6.600q2.500 0 2.500 2.500v9.300H11.900z" fill="#fff"/></svg>
<div style="position:absolute;left:2500px;top:1165px;width:90px;height:60px;overflow:hidden">
<span class="t" style="left:27.52px;top:16.00px;font-size:23.84px;line-height:27px;color:#5d6472;transform:scaleX(0.9861);">Lilly D</span>
</div>
<div style="position:absolute;left:2622px;top:1179px;width:8px;height:8px;border-radius:50%;background:#1400e6"></div>
<div style="position:absolute;left:2622px;top:1191px;width:8px;height:8px;border-radius:50%;background:#1400e6"></div>
<div style="position:absolute;left:2622px;top:1203px;width:8px;height:8px;border-radius:50%;background:#1400e6"></div>
<div style="position:absolute;left:338px;top:290px;width:12px;height:973px;background:linear-gradient(90deg,rgba(0,0,0,.035),rgba(0,0,0,0))"></div>
<span class="t" style="left:2162.48px;top:1285.25px;font-size:21.08px;line-height:23px;color:#3b4150;transform:scaleX(0.9038);-webkit-text-stroke:0.3px #3b4150;">Page 1</span>
<div style="position:absolute;left:2247px;top:1277px;width:40px;height:40px;box-sizing:border-box;border-radius:50%;background:#f3f5fd;border:1px solid #d9dce6;box-shadow:0 4px 6px rgba(40,40,90,.28)"></div>
<svg style="position:absolute;left:2259px;top:1287px" width="16" height="20" viewBox="0 0 16 20" fill="none" stroke="#111" stroke-width="2.3"><path d="M12.5 3L4.3 10l8.200 7"/></svg>
<div style="position:absolute;left:2322.5px;top:1277px;width:40px;height:40px;border-radius:50%;background:#4fab2e"></div>
<span class="t" style="left:2336.73px;top:1285.50px;font-size:19.72px;line-height:22px;color:#fff;transform:scaleX(1.0000);-webkit-text-stroke:0.4px #fff;">1</span>
<div style="position:absolute;left:2370.5px;top:1277px;width:40px;height:40px;box-sizing:border-box;border-radius:50%;background:#f3f5fd;border:1px solid #d9dce6;box-shadow:0 4px 6px rgba(40,40,90,.28)"></div>
<svg style="position:absolute;left:2383px;top:1287px" width="16" height="20" viewBox="0 0 16 20" fill="none" stroke="#111" stroke-width="2.3"><path d="M3.500 3l8.200 7-8.200 7"/></svg>
<span class="t" style="left:2451.40px;top:1285.25px;font-size:21.08px;line-height:23px;color:#3b4150;transform:scaleX(0.9347);-webkit-text-stroke:0.3px #3b4150;">View:</span>
<div style="position:absolute;left:2518.5px;top:1274.5px;width:127px;height:45px;box-sizing:border-box;border-radius:15px;background:#f5f7fe;border:2px solid #caced6"></div>
<span class="t" style="left:2529.53px;top:1286.25px;font-size:21.08px;line-height:23px;color:#4b5262;transform:scaleX(0.9170);">20 rows</span>
<svg style="position:absolute;left:2616px;top:1287px" width="16" height="21" viewBox="0 0 16 21" fill="none" stroke="#4b5262" stroke-width="1.700"><path d="M2.600 8.600L8 3.200l5.400 5.400M2.600 12.700L8 18.100l5.400-5.400"/></svg>
</body></html>
